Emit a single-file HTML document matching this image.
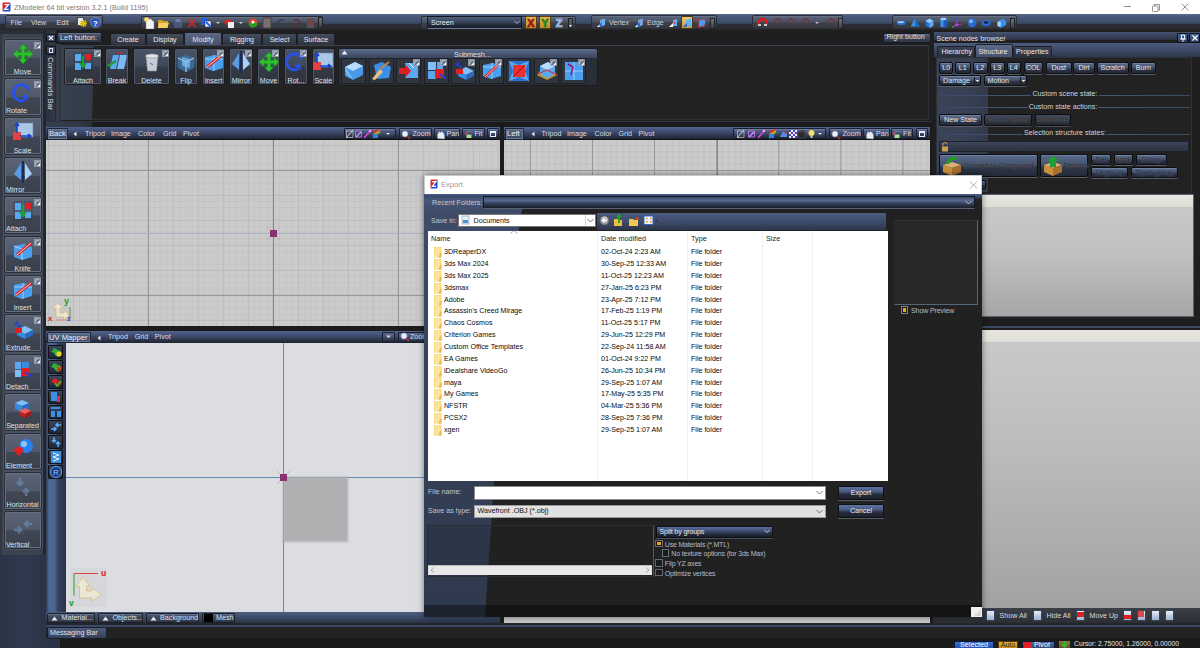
<!DOCTYPE html><html><head><meta charset="utf-8"><style>

*{margin:0;padding:0;box-sizing:border-box}
html,body{width:1200px;height:648px;overflow:hidden;background:#1f1f1f;font-family:"Liberation Sans", sans-serif}
div{position:absolute}
.t{white-space:nowrap;line-height:1}
.lb{background:linear-gradient(#5a6476 0%,#4f596a 50%,#404754 52%,#3a404b 100%);border:1px solid #2a2e36;border-radius:2px;box-shadow:0 0 0 1px #4a5260,inset 0 0 0 1px #646e80}
.cb{background:linear-gradient(#4a5467 0%,#3f4858 48%,#353b46 52%,#2e333c 100%);border:1px solid #1b1d22;border-radius:2px;box-shadow:inset 0 0 0 1px #4f596b}
.sb{background:linear-gradient(#5a6a8c 0%,#46546f 45%,#2e3648 60%,#232a38 100%);border:1px solid #0c0e12;border-radius:2px;box-shadow:0 1px 0 #5a5e66,inset 0 1px 0 #7080a0}
.db{background:linear-gradient(#444c5c,#30363f 50%,#262a32);border:1px solid #0c0e12;border-radius:2px;box-shadow:0 1px 0 #4a4e56}
.grp{background:linear-gradient(#5a6478 0%,#4c5568 45%,#3c4049 58%,#35383f 100%);border:1px solid #2a2e36;border-radius:2px;box-shadow:inset 0 1px 0 #667088}
.tab{background:linear-gradient(#4a5468,#353c4a);border:1px solid #1a1c20;border-bottom:none;border-radius:2px 2px 0 0}
.hdr{background:linear-gradient(#50618a 0%,#3e4c6c 45%,#262e3e 100%)}
.ck{width:8px;height:8px;border:1px solid #707070;background:#1c1c1c}

</style></head><body>
<div style="left:0px;top:0px;width:1200px;height:14px;background:#fff"></div>
<svg style="position:absolute;left:2px;top:2px" width="9" height="10" viewBox="0 0 9 10"><path d="M0.5 1.5Q0.5 0.5 1.5 0.5H8.5L0.5 9.5z" fill="#e02828"/><path d="M8.5 0.5V8.5Q8.5 9.5 7.5 9.5H0.5z" fill="#1a48d0"/><path d="M2.5 2.6H6.5L2.7 7.4H6.7" stroke="#fff" stroke-width="1.3" fill="none"/></svg>
<div class="t" style="left:14px;top:3.5px;font-size:7.22px;color:#7a7a7a;">ZModeler 64 bit version 3.2.1 (Build 1195)</div>
<div style="left:1124px;top:6px;width:7px;height:1px;background:#888"></div>
<svg style="position:absolute;left:1151px;top:2.5px" width="10" height="9" viewBox="0 0 10 9"><rect x="1.5" y="3" width="5.5" height="5.5" fill="none" stroke="#888" stroke-width=".9" rx=".8"/><path d="M3 3V1.5H8.5V7H7" fill="none" stroke="#888" stroke-width=".9"/></svg>
<svg style="position:absolute;left:1180px;top:2px" width="10" height="10" viewBox="0 0 10 10"><path d="M1.5 1.5L8.5 8.5M8.5 1.5L1.5 8.5" stroke="#888" stroke-width="0.9"/></svg>
<div style="left:0px;top:14px;width:1200px;height:16px;background:linear-gradient(180deg,#5a6a8a 0%,#4a5a7c 14%,#3c4a66 58%,#2c2e34 64%,#252527 100%)"></div>
<div class="grp" style="left:5px;top:15px;width:98px;height:14px;"></div>
<div class="t" style="left:10.5px;top:19.6px;font-size:7.1px;color:#d0d6e0;">File</div>
<div class="t" style="left:31px;top:19.6px;font-size:7.1px;color:#d0d6e0;">View</div>
<div class="t" style="left:56.5px;top:19.6px;font-size:7.1px;color:#d0d6e0;">Edit</div>
<svg style="position:absolute;left:77px;top:17px" width="10" height="11" viewBox="0 0 10 11"><rect x="0.5" y="0.5" width="6" height="8" fill="#e8e8e8" stroke="#333" stroke-width="0.8"/><path d="M4 4l5 5M9 4l-5 5M6.5 3v7M3 6.5h7" stroke="#d8c000" stroke-width="1.6"/></svg>
<svg style="position:absolute;left:90px;top:17px" width="11" height="11" viewBox="0 0 11 11"><circle cx="5.5" cy="5.5" r="5" fill="#2a54c0" stroke="#9ab" stroke-width="0.6"/><text x="5.5" y="8.6" font-size="8" fill="#fff" text-anchor="middle" font-family="Liberation Sans" font-weight="bold">?</text></svg>
<div class="grp" style="left:141px;top:15.5px;width:182px;height:13.5px;"></div>
<svg style="position:absolute;left:144px;top:16.5px" width="11" height="12" viewBox="0 0 11 12"><path d="M2 2h5l3 3v7H2z" fill="#f4f4f4" stroke="#888" stroke-width=".5"/><circle cx="2.5" cy="2.5" r="2.3" fill="#ffe060"/></svg>
<svg style="position:absolute;left:158px;top:16.5px" width="11" height="12" viewBox="0 0 11 12"><path d="M0 3h4l1 1h5v7H0z" fill="#d8a030"/><path d="M1 6h10l-2 5H0z" fill="#f8d060"/></svg>
<svg style="position:absolute;left:172.5px;top:16.5px" width="11" height="12" viewBox="0 0 11 12"><rect x="1" y="2" width="8" height="9" fill="#5a6aa0" opacity=".55"/><rect x="3" y="2" width="4" height="3" fill="#8a9ac0" opacity=".5"/></svg>
<svg style="position:absolute;left:186.5px;top:16.5px" width="11" height="12" viewBox="0 0 11 12"><path d="M1.5 2l7 8M8.5 2l-7 8" stroke="#e02020" stroke-width="1.3"/></svg>
<svg style="position:absolute;left:201px;top:16.5px" width="11" height="12" viewBox="0 0 11 12"><path d="M0 1h7v3H4v4H0z" fill="#2060e0"/><rect x="4" y="4" width="6" height="6" fill="#e8eef8" stroke="#223" stroke-width=".5"/><path d="M5 5l5 5" stroke="#2060e0" stroke-width="1.8"/></svg>
<svg style="position:absolute;left:224px;top:16.5px" width="11" height="12" viewBox="0 0 11 12"><path d="M0 5l4-4v2h4v4H4v2z" fill="#e02020"/><rect x="4" y="5" width="6" height="6" fill="#eee"/></svg>
<svg style="position:absolute;left:247.5px;top:16.5px" width="11" height="12" viewBox="0 0 11 12"><circle cx="5" cy="6" r="4.5" fill="#e04020"/><path d="M.5 6a4.5 4.5 0 0 0 9 0z" fill="#20a020"/><circle cx="5" cy="5" r="1.6" fill="#f8f8f8"/></svg>
<svg style="position:absolute;left:262px;top:16.5px" width="11" height="12" viewBox="0 0 11 12"><rect x="1" y="1" width="8" height="10" fill="#7a7070" stroke="#4a4040" stroke-width="1"/></svg>
<svg style="position:absolute;left:276.5px;top:16.5px" width="11" height="12" viewBox="0 0 11 12"><path d="M3 4a3.5 3.5 0 1 1 0 5" fill="none" stroke="#303a60" stroke-width="1.3" transform="scale(-1,1) translate(-10,0)"/></svg>
<svg style="position:absolute;left:291px;top:16.5px" width="11" height="12" viewBox="0 0 11 12"><path d="M3 4a3.5 3.5 0 1 1 0 5" fill="none" stroke="#5a3030" stroke-width="1.3"/></svg>
<svg style="position:absolute;left:305.5px;top:16.5px" width="11" height="12" viewBox="0 0 11 12"><rect x="1" y="1" width="7" height="10" fill="#5a5050"/><path d="M2 4h5M2 7h5" stroke="#a03030"/></svg>
<svg style="position:absolute;left:215.5px;top:21px" width="4" height="4" viewBox="0 0 4 4"><path d="M0 1h4L2 3z" fill="#ccc"/></svg>
<svg style="position:absolute;left:239px;top:21px" width="4" height="4" viewBox="0 0 4 4"><path d="M0 1h4L2 3z" fill="#ccc"/></svg>
<div style="left:318px;top:17px;width:4.5px;height:11px;background:linear-gradient(#6a7388,#3a4050);border:1px solid #222"></div>
<div class="grp" style="left:421px;top:15.5px;width:155px;height:13.5px;"></div>
<div style="left:426.5px;top:16px;width:95.5px;height:12.5px;background:linear-gradient(#52627f,#3a4660 40%,#222838 75%,#1a1e2a);border:1px solid #14171e;border-bottom-color:#6a7a98;border-radius:2px"></div>
<div class="t" style="left:431px;top:19.6px;font-size:7.15px;color:#eef0f4;">Screen</div>
<svg style="position:absolute;left:514px;top:19.5px" width="6" height="5" viewBox="0 0 6 5"><path d="M0.5 1L3 3.5 5.5 1" stroke="#ccd" fill="none" stroke-width=".9"/></svg>
<div style="left:525px;top:16px;width:12px;height:13px;background:linear-gradient(#e8b850,#c08828);border:1px solid #5a4010;border-radius:1px"></div>
<svg style="position:absolute;left:525px;top:16px" width="12" height="13" viewBox="0 0 12 13"><text x="6" y="11" font-size="11" font-weight="bold" text-anchor="middle" fill="#c81818" stroke="#801010" stroke-width=".6" font-family="Liberation Sans">X</text></svg>
<div style="left:539px;top:16px;width:12px;height:13px;background:linear-gradient(#e8b850,#c08828);border:1px solid #5a4010;border-radius:1px"></div>
<svg style="position:absolute;left:539px;top:16px" width="12" height="13" viewBox="0 0 12 13"><text x="6" y="11" font-size="11" font-weight="bold" text-anchor="middle" fill="#28b028" stroke="#106010" stroke-width=".6" font-family="Liberation Sans">Y</text></svg>
<svg style="position:absolute;left:553px;top:16px" width="12" height="13" viewBox="0 0 12 13"><text x="6" y="11" font-size="11" font-weight="bold" text-anchor="middle" fill="#2a78f0" stroke="#f0f4ff" stroke-width=".5" font-family="Liberation Sans">Z</text></svg>
<div style="left:568px;top:18px;width:5px;height:10.5px;background:linear-gradient(#5a6378,#3a4050);border:1px solid #222"></div>
<svg style="position:absolute;left:569px;top:25px" width="3" height="2" viewBox="0 0 3 2"><path d="M0 0h3L1.5 2z" fill="#fff"/></svg>
<div class="grp" style="left:591px;top:15px;width:126px;height:14px;"></div>
<svg style="position:absolute;left:596px;top:17px" width="11" height="11" viewBox="0 0 11 11"><path d="M4 3l5-1.5V8L4 10z" fill="#6ab0f8"/><path d="M1 10L6 5v5z" fill="#2a6ad0"/><path d="M1 10l2.5-2.5V10z" fill="#fff"/><circle cx="3.5" cy="4" r="1" fill="#e02020"/><path d="M1 1.5l2.5 2" stroke="#20a020" stroke-width=".8"/></svg>
<div class="t" style="left:609px;top:20.4px;font-size:7.1px;color:#c8d0dc;">Vertex</div>
<svg style="position:absolute;left:634px;top:17px" width="11" height="11" viewBox="0 0 11 11"><path d="M4 3l5-1.5V8L4 10z" fill="#6ab0f8"/><path d="M1 10L6 5v5z" fill="#2a6ad0"/><path d="M1 10l2.5-2.5V10z" fill="#fff"/><circle cx="3.5" cy="4" r="1" fill="#e02020"/><path d="M1 1.5l2.5 2" stroke="#20a020" stroke-width=".8"/><path d="M2 10l2 1.5" stroke="#20a020" stroke-width=".8"/><path d="M9 2v6" stroke="#e02020" stroke-width=".6"/></svg>
<div class="t" style="left:647px;top:20.4px;font-size:7.1px;color:#c8d0dc;">Edge</div>
<svg style="position:absolute;left:668px;top:17px" width="11" height="11" viewBox="0 0 11 11"><path d="M5 3l4-1v7H5z" fill="#6ab0f8"/><path d="M1 10l4-4v4z" fill="#fff"/><path d="M6 5l2 1-2 1z" fill="#e02020"/><path d="M5 2l2 1" stroke="#e02020" stroke-width=".6"/></svg>
<div style="left:681px;top:15.5px;width:12px;height:13.5px;background:linear-gradient(#f0c870,#c89838);border:1px solid #4a3a10;border-radius:1px"></div>
<svg style="position:absolute;left:682px;top:17.5px" width="11" height="11" viewBox="0 0 11 11"><path d="M4 2l5-1.5V8L4 9z" fill="#6ab0f8"/><path d="M1 9L5 5v4z" fill="#2a6ad0"/></svg>
<svg style="position:absolute;left:696px;top:17px" width="11" height="11" viewBox="0 0 11 11"><path d="M3 3l5-1.5 2 3-2 5-5 .5z" fill="#4a98f0"/><path d="M1 3l9-1-1 7-6 1z" fill="none" stroke="#e02020" stroke-width=".7"/><circle cx="1" cy="3" r="1" fill="#e02020"/><circle cx="3" cy="10" r="1" fill="#e02020"/></svg>
<div style="left:710px;top:18px;width:5px;height:10.5px;background:linear-gradient(#6a7388,#3a4050);border:1px solid #222"></div>
<div class="grp" style="left:752px;top:15px;width:91px;height:14px;"></div>
<svg style="position:absolute;left:757px;top:17px" width="11" height="11" viewBox="0 0 11 11"><path d="M2 8a4 4 0 1 1 7 0" fill="none" stroke="#e01818" stroke-width="2.6"/><path d="M1 8h3M7 8h3" stroke="#f0f0f0" stroke-width="1.5"/></svg>
<svg style="position:absolute;left:772px;top:17px" width="11" height="11" viewBox="0 0 11 11"><path d="M2 8a4 4 0 1 1 7 0" fill="none" stroke="#6a3a40" stroke-width="1.6"/><circle cx="5.5" cy="5" r="1.5" fill="none" stroke="#5a4a50" stroke-width=".6"/></svg>
<svg style="position:absolute;left:786px;top:17px" width="11" height="11" viewBox="0 0 11 11"><path d="M2 8a4 4 0 1 1 7 0" fill="none" stroke="#6a3a40" stroke-width="1.6"/><circle cx="5.5" cy="5" r="1.5" fill="none" stroke="#5a4a50" stroke-width=".6"/></svg>
<svg style="position:absolute;left:800px;top:17px" width="11" height="11" viewBox="0 0 11 11"><path d="M2 8a4 4 0 1 1 7 0" fill="none" stroke="#6a3a40" stroke-width="1.6"/><circle cx="5.5" cy="5" r="1.5" fill="none" stroke="#5a4a50" stroke-width=".6"/></svg>
<svg style="position:absolute;left:826px;top:17px" width="11" height="11" viewBox="0 0 11 11"><path d="M2 8a4 4 0 1 1 7 0" fill="none" stroke="#6a3a40" stroke-width="1.6"/><circle cx="5.5" cy="5" r="1.5" fill="none" stroke="#5a4a50" stroke-width=".6"/></svg>
<svg style="position:absolute;left:815px;top:21px" width="4" height="4" viewBox="0 0 4 4"><path d="M0 1h4L2 3z" fill="#bbb"/></svg>
<div style="left:838px;top:18px;width:5px;height:10.5px;background:linear-gradient(#6a7388,#3a4050);border:1px solid #222"></div>
<div class="grp" style="left:892px;top:15px;width:125px;height:14px;"></div>
<svg style="position:absolute;left:896px;top:16.5px" width="11" height="11" viewBox="0 0 14 14"><rect x="1" y="5" width="11" height="5" rx="2.5" fill="#2a7ae0"/><rect x="2" y="5.5" width="8" height="2" rx="1" fill="#9cd0ff"/></svg>
<svg style="position:absolute;left:910px;top:16.5px" width="11" height="11" viewBox="0 0 14 14"><path d="M6.5 1L12 12H1z" fill="#3a90e8"/><path d="M6.5 1L12 12H7z" fill="#1a60c0"/></svg>
<svg style="position:absolute;left:924px;top:16.5px" width="11" height="11" viewBox="0 0 14 14"><path d="M2 5l5-3 5 3v6l-5 3-5-3z" fill="#2a70c8"/><path d="M2 5l5-3 5 3-5 3z" fill="#90c8ff"/><path d="M7 8v6l5-3V5z" fill="#60a8f0"/></svg>
<svg style="position:absolute;left:938px;top:16.5px" width="11" height="11" viewBox="0 0 14 14"><rect x="3" y="2" width="8" height="11" rx="2" fill="#3a90e8"/><rect x="7" y="2" width="4" height="11" fill="#1a5ac0"/><ellipse cx="7" cy="2.5" rx="4" ry="1.5" fill="#a0d0ff"/></svg>
<svg style="position:absolute;left:952px;top:16.5px" width="11" height="11" viewBox="0 0 14 14"><path d="M6 2v8M6 10l-5 3M6 10l6-1" stroke="#9040c0" stroke-width="1.2"/><circle cx="6" cy="10" r="2" fill="#c040e0"/><circle cx="1.5" cy="12.5" r="1.2" fill="#20c020"/><circle cx="12" cy="9" r="1.2" fill="#e02020"/><circle cx="6" cy="2" r="1.2" fill="#2050e0"/></svg>
<svg style="position:absolute;left:967px;top:16.5px" width="11" height="11" viewBox="0 0 14 14"><circle cx="6.5" cy="7.5" r="5.5" fill="#2a6ad0"/><circle cx="5" cy="5.5" r="2.5" fill="#90c8ff" opacity=".8"/></svg>
<svg style="position:absolute;left:981px;top:16.5px" width="11" height="11" viewBox="0 0 14 14"><ellipse cx="6.5" cy="7.5" rx="6" ry="4" fill="#2a6ad0"/><ellipse cx="6.5" cy="7" rx="3" ry="1.5" fill="#1a2030"/></svg>
<svg style="position:absolute;left:996px;top:16.5px" width="11" height="11" viewBox="0 0 14 14"><path d="M2 6l7-4 4 3v5l-7 4-4-3z" fill="#3a90e8"/><ellipse cx="4" cy="9" rx="2.5" ry="3.5" fill="#a0d0ff"/></svg>
<div style="left:1010px;top:18px;width:5px;height:10.5px;background:linear-gradient(#6a7388,#3a4050);border:1px solid #222"></div>
<div style="left:0px;top:30px;width:43px;height:525px;background:linear-gradient(90deg,#30353f,#3c4350 8%,#3c4350 92%,#343a45)"></div>
<div style="left:0px;top:30px;width:43px;height:4px;background:#2a2e36"></div>
<div style="left:0px;top:555px;width:46px;height:93px;background:linear-gradient(90deg,#2a3446,#2f3a4e 50%,#2a3446)"></div>
<div class="lb" style="left:3.5px;top:38.6px;width:38px;height:37.5px;"></div>
<svg style="position:absolute;left:11px;top:42.6px" width="24" height="22" viewBox="0 0 24 22"><g style="opacity:1"><path d="M12 1L16.5 6.0H13.7V9.3H17.0V6.5L22 11L17.0 15.5V12.7H13.7V16.0H16.5L12 21L7.5 16.0H10.3V12.7H7.0V15.5L2 11L7.0 6.5V9.3H10.3V6.0H7.5Z" fill="#2ec02e" stroke="#1a8a1a" stroke-width=".6"/></g></svg>
<svg style="position:absolute;left:34px;top:41.6px" width="7" height="7" viewBox="0 0 7 7"><rect x=".5" y=".5" width="6" height="6" fill="#5e687a" stroke="#a8b2c2" stroke-width=".7"/><path d="M1.8 5.5V1.8H5.5" stroke="#f0f2f6" fill="none" stroke-width=".8"/><path d="M3 6l3-3v3z" fill="#f0f2f6"/></svg>
<div class="t" style="left:3.5px;top:68.8px;width:38px;text-align:center;font-size:7.1px;color:#dfe3ea">Move</div>
<div class="lb" style="left:3.5px;top:78.0px;width:38px;height:37.5px;"></div>
<svg style="position:absolute;left:11px;top:82.0px" width="24" height="22" viewBox="0 0 24 22"><g style="opacity:1"><path d="M18 8A8 8 0 1 0 14 18" fill="none" stroke="#2a50e8" stroke-width="3"/><path d="M10 15l7 4-1-7z" fill="#2a50e8"/></g></svg>
<svg style="position:absolute;left:34px;top:81.0px" width="7" height="7" viewBox="0 0 7 7"><rect x=".5" y=".5" width="6" height="6" fill="#5e687a" stroke="#a8b2c2" stroke-width=".7"/><path d="M1.8 5.5V1.8H5.5" stroke="#f0f2f6" fill="none" stroke-width=".8"/><path d="M3 6l3-3v3z" fill="#f0f2f6"/></svg>
<div class="t" style="left:6px;top:108.2px;font-size:7.1px;color:#dfe3ea;">Rotate</div>
<div class="lb" style="left:3.5px;top:117.4px;width:38px;height:37.5px;"></div>
<svg style="position:absolute;left:11px;top:121.4px" width="24" height="22" viewBox="0 0 24 22"><g style="opacity:1"><rect x="6" y="2" width="16" height="14" fill="#a8c8e8" stroke="#6a88a8" stroke-width=".6"/><rect x="2" y="11" width="8" height="8" fill="#e84040"/><path d="M6 12V3M4 5l2-3 2 3" stroke="#1a40d0" stroke-width="1.5" fill="#1a40d0"/><path d="M9 15h10M17 13l3 2-3 2" stroke="#1a40d0" stroke-width="1.5" fill="#1a40d0"/></g></svg>
<div class="t" style="left:3.5px;top:147.6px;width:38px;text-align:center;font-size:7.1px;color:#dfe3ea">Scale</div>
<div class="lb" style="left:3.5px;top:156.79999999999998px;width:38px;height:37.5px;"></div>
<svg style="position:absolute;left:11px;top:160.79999999999998px" width="24" height="22" viewBox="0 0 24 22"><g style="opacity:1"><path d="M10 2L3 13l7 6z" fill="#5a9ae0"/><path d="M14 2l7 11-7 6z" fill="#a8d0f8"/><rect x="11" y="0" width="2" height="22" fill="#1a2a60"/></g></svg>
<svg style="position:absolute;left:34px;top:159.79999999999998px" width="7" height="7" viewBox="0 0 7 7"><rect x=".5" y=".5" width="6" height="6" fill="#5e687a" stroke="#a8b2c2" stroke-width=".7"/><path d="M1.8 5.5V1.8H5.5" stroke="#f0f2f6" fill="none" stroke-width=".8"/><path d="M3 6l3-3v3z" fill="#f0f2f6"/></svg>
<div class="t" style="left:6px;top:186.99999999999997px;font-size:7.1px;color:#dfe3ea;">Mirror</div>
<div class="lb" style="left:3.5px;top:196.2px;width:38px;height:37.5px;"></div>
<svg style="position:absolute;left:11px;top:200.2px" width="24" height="22" viewBox="0 0 24 22"><g style="opacity:1"><rect x="4" y="3" width="6" height="7" fill="#5aa8f0"/><rect x="4" y="12" width="6" height="7" fill="#5aa8f0"/><rect x="14" y="12" width="6" height="6" fill="#5aa8f0"/><rect x="14" y="3" width="6" height="6" fill="#e02020"/><path d="M12 5v10M9 12l3 4 3-4" stroke="#20a030" stroke-width="2" fill="none"/><rect x="3" y="2" width="18" height="18" fill="none" stroke="#20283a" stroke-dasharray="1 1.5"/></g></svg>
<svg style="position:absolute;left:34px;top:199.2px" width="7" height="7" viewBox="0 0 7 7"><rect x=".5" y=".5" width="6" height="6" fill="#5e687a" stroke="#a8b2c2" stroke-width=".7"/><path d="M1.8 5.5V1.8H5.5" stroke="#f0f2f6" fill="none" stroke-width=".8"/><path d="M3 6l3-3v3z" fill="#f0f2f6"/></svg>
<div class="t" style="left:6px;top:226.39999999999998px;font-size:7.1px;color:#dfe3ea;">Attach</div>
<div class="lb" style="left:3.5px;top:235.6px;width:38px;height:37.5px;"></div>
<svg style="position:absolute;left:11px;top:239.6px" width="24" height="22" viewBox="0 0 24 22"><g style="opacity:1"><path d="M3 6l10-2 8 3v10l-10 3-8-3z" fill="#4aa0f0"/><path d="M3 6l8 3v11" fill="none" stroke="#c8e4ff" stroke-width=".8"/><path d="M6 15L20 3" stroke="#e02020" stroke-width="3"/><path d="M6 15L20 3" stroke="#fff" stroke-width=".8"/></g></svg>
<svg style="position:absolute;left:34px;top:238.6px" width="7" height="7" viewBox="0 0 7 7"><rect x=".5" y=".5" width="6" height="6" fill="#5e687a" stroke="#a8b2c2" stroke-width=".7"/><path d="M1.8 5.5V1.8H5.5" stroke="#f0f2f6" fill="none" stroke-width=".8"/><path d="M3 6l3-3v3z" fill="#f0f2f6"/></svg>
<div class="t" style="left:3.5px;top:265.8px;width:38px;text-align:center;font-size:7.1px;color:#dfe3ea">Knife</div>
<div class="lb" style="left:3.5px;top:275.0px;width:38px;height:37.5px;"></div>
<svg style="position:absolute;left:11px;top:279.0px" width="24" height="22" viewBox="0 0 24 22"><g style="opacity:1"><path d="M3 6l10-2 8 3v10l-10 3-8-3z" fill="#4aa0f0"/><path d="M3 8h18M12 4v16" stroke="#a8d8ff" stroke-width=".8"/><path d="M5 16L20 4" stroke="#e02020" stroke-width="3"/><path d="M5 16L20 4" stroke="#fff" stroke-width=".8"/></g></svg>
<svg style="position:absolute;left:34px;top:278.0px" width="7" height="7" viewBox="0 0 7 7"><rect x=".5" y=".5" width="6" height="6" fill="#5e687a" stroke="#a8b2c2" stroke-width=".7"/><path d="M1.8 5.5V1.8H5.5" stroke="#f0f2f6" fill="none" stroke-width=".8"/><path d="M3 6l3-3v3z" fill="#f0f2f6"/></svg>
<div class="t" style="left:3.5px;top:305.2px;width:38px;text-align:center;font-size:7.1px;color:#dfe3ea">Insert</div>
<div class="lb" style="left:3.5px;top:314.40000000000003px;width:38px;height:37.5px;"></div>
<svg style="position:absolute;left:11px;top:318.40000000000003px" width="24" height="22" viewBox="0 0 24 22"><g style="opacity:1"><path d="M6 12l8-4 8 4-8 4z" fill="#80c0f8"/><path d="M6 12v5l8 4v-5z" fill="#3a8ae0"/><path d="M14 16v5l8-4v-5z" fill="#2a6ac0"/><rect x="4" y="10" width="7" height="5" fill="#e02020"/><path d="M7 10V2l-4 5h8z" fill="#1a40e0"/></g></svg>
<svg style="position:absolute;left:34px;top:317.40000000000003px" width="7" height="7" viewBox="0 0 7 7"><rect x=".5" y=".5" width="6" height="6" fill="#5e687a" stroke="#a8b2c2" stroke-width=".7"/><path d="M1.8 5.5V1.8H5.5" stroke="#f0f2f6" fill="none" stroke-width=".8"/><path d="M3 6l3-3v3z" fill="#f0f2f6"/></svg>
<div class="t" style="left:6px;top:344.6px;font-size:7.1px;color:#dfe3ea;">Extrude</div>
<div class="lb" style="left:3.5px;top:353.8px;width:38px;height:37.5px;"></div>
<svg style="position:absolute;left:11px;top:357.8px" width="24" height="22" viewBox="0 0 24 22"><g style="opacity:1"><rect x="4" y="4" width="6" height="7" fill="#5aa8f0"/><rect x="4" y="12" width="6" height="7" fill="#80c0f8"/><rect x="11" y="4" width="7" height="7" fill="#3a8ae0"/><path d="M10 10h8v8h-8z" fill="#e02020"/><path d="M14 14l7 5" stroke="#1a40e0" stroke-width="2"/></g></svg>
<svg style="position:absolute;left:34px;top:356.8px" width="7" height="7" viewBox="0 0 7 7"><rect x=".5" y=".5" width="6" height="6" fill="#5e687a" stroke="#a8b2c2" stroke-width=".7"/><path d="M1.8 5.5V1.8H5.5" stroke="#f0f2f6" fill="none" stroke-width=".8"/><path d="M3 6l3-3v3z" fill="#f0f2f6"/></svg>
<div class="t" style="left:6px;top:384.0px;font-size:7.1px;color:#dfe3ea;">Detach</div>
<div class="lb" style="left:3.5px;top:393.2px;width:38px;height:37.5px;"></div>
<svg style="position:absolute;left:11px;top:397.2px" width="24" height="22" viewBox="0 0 24 22"><g style="opacity:1"><path d="M4 6l7-3 7 3-7 3z" fill="#80c0f8"/><path d="M4 6v6l7 3V9z" fill="#3a8ae0"/><path d="M11 9v6l7-3V6z" fill="#2a6ac0"/><path d="M8 14l6-3 6 3-6 3z" fill="#f06060"/><path d="M8 14v4l6 3v-4z" fill="#c02020"/><path d="M14 17v4l6-3v-4z" fill="#a01818"/></g></svg>
<div class="t" style="left:3.5px;top:423.4px;width:38px;text-align:center;font-size:7.1px;color:#dfe3ea">Separated</div>
<div class="lb" style="left:3.5px;top:432.6px;width:38px;height:37.5px;"></div>
<svg style="position:absolute;left:11px;top:436.6px" width="24" height="22" viewBox="0 0 24 22"><g style="opacity:1"><circle cx="15" cy="9" r="7" fill="#2a80f0"/><circle cx="13" cy="7" r="3" fill="#a8d8ff" opacity=".8"/><path d="M2 13l6-4 5 4-5 6z" fill="#e02020"/></g></svg>
<div class="t" style="left:6px;top:462.8px;font-size:7.1px;color:#dfe3ea;">Element</div>
<div class="lb" style="left:3.5px;top:472.0px;width:38px;height:37.5px;"></div>
<svg style="position:absolute;left:11px;top:476.0px" width="24" height="22" viewBox="0 0 24 22"><g style="opacity:0.7"><path d="M9 2v6M6 6l3 3 3-3" stroke="#6a88b0" stroke-width="2.5" fill="none"/><path d="M3 11h18" stroke="#4a5a70" stroke-width="1"/><path d="M15 20v-6M12 16l3-3 3 3" stroke="#6a88b0" stroke-width="2.5" fill="none"/></g></svg>
<div class="t" style="left:3.5px;top:502.2px;width:38px;text-align:center;font-size:7.1px;color:#dfe3ea">Horizontal</div>
<div class="lb" style="left:3.5px;top:511.4px;width:38px;height:37.5px;"></div>
<svg style="position:absolute;left:11px;top:515.4px" width="24" height="22" viewBox="0 0 24 22"><g style="opacity:0.7"><path d="M3 15h6M7 12l3 3-3 3" stroke="#6a88b0" stroke-width="2.5" fill="none"/><path d="M12 4v16" stroke="#4a5a70" stroke-width="1"/><path d="M21 9h-6M17 6l-3 3 3 3" stroke="#6a88b0" stroke-width="2.5" fill="none"/></g></svg>
<div class="t" style="left:6px;top:541.6px;font-size:7.1px;color:#dfe3ea;">Vertical</div>
<div style="left:43px;top:30px;width:3px;height:525px;background:#23272e"></div>
<div style="left:46px;top:30px;width:10px;height:92px;background:linear-gradient(90deg,#2a303c,#313846);border-right:1px solid #262a33"></div>
<div style="left:56px;top:44px;width:5px;height:77px;background:#353c4a"></div>
<div style="left:46.3px;top:33.5px;width:9.4px;height:8.6px;background:linear-gradient(#4a5878,#2e3850);border:1px solid #0e1016;border-radius:1px"></div>
<svg style="position:absolute;left:47px;top:34px" width="8" height="8" viewBox="0 0 8 8"><path d="M2 2l4 4M6 2L2 6" stroke="#f0f0f0" stroke-width="1.2"/></svg>
<div style="left:46.3px;top:45.5px;width:9.4px;height:9px;background:linear-gradient(#4a5878,#2e3850);border:1px solid #0e1016;border-radius:1px"></div>
<div style="left:49px;top:47.5px;width:4px;height:5px;border:1px solid #e0e0e0;border-top-width:1.5px"></div>
<div class="t" style="left:46.3px;top:56.5px;font-size:7.7px;color:#d4d8e0;writing-mode:vertical-rl;">Commands Bar</div>
<div style="left:57px;top:32.4px;width:44.5px;height:10.4px;background:linear-gradient(#4e5a72,#3a4458 50%,#2e3648);border:1px solid #1a1d22;border-radius:2px;box-shadow:inset 0 1px 0 #64708a"></div>
<div class="t" style="left:60px;top:34.3px;font-size:7.4px;color:#dce0e8;">Left button:</div>
<div style="left:60px;top:44.5px;width:868.5px;height:75.5px;background:#232323;border:1px solid #2d3138;border-top-color:#3a4150"></div>
<div style="left:61px;top:45px;width:34px;height:75px;background:linear-gradient(90deg,#36404f,#323b4a);clip-path:polygon(0 0,33px 0,31px 75px,0 75px)"></div>
<div style="left:110px;top:33px;width:36px;height:12px;background:linear-gradient(#434c5e,#2e333e);border:1px solid #1b1d22;border-bottom:none;border-radius:2px 2px 0 0"></div>
<div class="t" style="left:110px;top:37.3px;width:36px;text-align:center;font-size:7.1px;color:#e4e8ee">Create</div>
<div style="left:146px;top:33px;width:38px;height:12px;background:linear-gradient(#434c5e,#2e333e);border:1px solid #1b1d22;border-bottom:none;border-radius:2px 2px 0 0"></div>
<div class="t" style="left:146px;top:37.3px;width:38px;text-align:center;font-size:7.1px;color:#e4e8ee">Display</div>
<div style="left:184px;top:31.5px;width:38px;height:13.5px;background:linear-gradient(#5c6884,#46506a);border:1px solid #1b1d22;border-bottom:none;border-radius:2px 2px 0 0"></div>
<div class="t" style="left:184px;top:36.8px;width:38px;text-align:center;font-size:7.1px;color:#e4e8ee">Modify</div>
<div style="left:222px;top:33px;width:40px;height:12px;background:linear-gradient(#434c5e,#2e333e);border:1px solid #1b1d22;border-bottom:none;border-radius:2px 2px 0 0"></div>
<div class="t" style="left:222px;top:37.3px;width:40px;text-align:center;font-size:7.1px;color:#e4e8ee">Rigging</div>
<div style="left:262px;top:33px;width:35px;height:12px;background:linear-gradient(#434c5e,#2e333e);border:1px solid #1b1d22;border-bottom:none;border-radius:2px 2px 0 0"></div>
<div class="t" style="left:262px;top:37.3px;width:35px;text-align:center;font-size:7.1px;color:#e4e8ee">Select</div>
<div style="left:297px;top:33px;width:38px;height:12px;background:linear-gradient(#434c5e,#2e333e);border:1px solid #1b1d22;border-bottom:none;border-radius:2px 2px 0 0"></div>
<div class="t" style="left:297px;top:37.3px;width:38px;text-align:center;font-size:7.1px;color:#e4e8ee">Surface</div>
<div class="cb" style="left:64px;top:47.8px;width:38px;height:37px;"></div>
<svg style="position:absolute;left:71.0px;top:50.5px" width="24" height="22" viewBox="0 0 24 22"><rect x="4" y="3" width="6" height="7" fill="#5aa8f0"/><rect x="4" y="12" width="6" height="7" fill="#5aa8f0"/><rect x="14" y="12" width="6" height="6" fill="#5aa8f0"/><rect x="14" y="3" width="6" height="6" fill="#e02020"/><path d="M12 5v10M9 12l3 4 3-4" stroke="#20a030" stroke-width="2" fill="none"/><rect x="3" y="2" width="18" height="18" fill="none" stroke="#20283a" stroke-dasharray="1 1.5"/></svg>
<svg style="position:absolute;left:94px;top:49.5px" width="7" height="7" viewBox="0 0 7 7"><rect x=".5" y=".5" width="6" height="6" fill="#5e687a" stroke="#a8b2c2" stroke-width=".7"/><path d="M1.8 5.5V1.8H5.5" stroke="#f0f2f6" fill="none" stroke-width=".8"/><path d="M3 6l3-3v3z" fill="#f0f2f6"/></svg>
<div class="t" style="left:64px;top:77.8px;width:38px;text-align:center;font-size:7.1px;color:#e0e4ea">Attach</div>
<div class="cb" style="left:105px;top:47.8px;width:24px;height:37px;"></div>
<svg style="position:absolute;left:105.0px;top:50.5px" width="24" height="22" viewBox="0 0 24 22"><path d="M8 4h6l-3 14H5z" fill="#5aa8f0"/><path d="M15 4h7l-3 14h-7z" fill="#7ab8f8"/><path d="M11 10L3 15" stroke="#20a030" stroke-width="2.5"/><circle cx="13" cy="2" r="1" fill="#e02020"/><circle cx="16" cy="2" r="1" fill="#e02020"/></svg>
<div class="t" style="left:105px;top:77.8px;width:24px;text-align:center;font-size:7.1px;color:#e0e4ea">Break</div>
<div class="cb" style="left:133px;top:47.8px;width:37px;height:37px;"></div>
<svg style="position:absolute;left:139.5px;top:50.5px" width="24" height="22" viewBox="0 0 24 22"><path d="M6 5h12l-1.5 15h-9z" fill="#c8ccd0" stroke="#8a9098" stroke-width=".6"/><ellipse cx="12" cy="5" rx="6.5" ry="2" fill="#e0e4e8" stroke="#8a9098" stroke-width=".6"/><path d="M10 12l3 2" stroke="#3a70d0"/></svg>
<svg style="position:absolute;left:162px;top:49.5px" width="7" height="7" viewBox="0 0 7 7"><rect x=".5" y=".5" width="6" height="6" fill="#5e687a" stroke="#a8b2c2" stroke-width=".7"/><path d="M1.8 5.5V1.8H5.5" stroke="#f0f2f6" fill="none" stroke-width=".8"/><path d="M3 6l3-3v3z" fill="#f0f2f6"/></svg>
<div class="t" style="left:133px;top:77.8px;width:37px;text-align:center;font-size:7.1px;color:#e0e4ea">Delete</div>
<div class="cb" style="left:174px;top:47.8px;width:24px;height:37px;"></div>
<svg style="position:absolute;left:174.0px;top:50.5px" width="24" height="22" viewBox="0 0 24 22"><path d="M4 7l8-4 8 4v10l-8 4-8-4z" fill="#3a6a98"/><path d="M4 7l8 4 8-4" fill="none" stroke="#b8dcf8" stroke-width="1"/><path d="M12 11v10" stroke="#b8dcf8"/><path d="M8 6l8 2v9l-8-2z" fill="#80c0f0" opacity=".7"/></svg>
<div class="t" style="left:174px;top:77.8px;width:24px;text-align:center;font-size:7.1px;color:#e0e4ea">Flip</div>
<div class="cb" style="left:202px;top:47.8px;width:23px;height:37px;"></div>
<svg style="position:absolute;left:201.5px;top:50.5px" width="24" height="22" viewBox="0 0 24 22"><path d="M3 6l10-2 8 3v10l-10 3-8-3z" fill="#4aa0f0"/><path d="M3 8h18M12 4v16" stroke="#a8d8ff" stroke-width=".8"/><path d="M5 16L20 4" stroke="#e02020" stroke-width="3"/><path d="M5 16L20 4" stroke="#fff" stroke-width=".8"/></svg>
<svg style="position:absolute;left:217px;top:49.5px" width="7" height="7" viewBox="0 0 7 7"><rect x=".5" y=".5" width="6" height="6" fill="#5e687a" stroke="#a8b2c2" stroke-width=".7"/><path d="M1.8 5.5V1.8H5.5" stroke="#f0f2f6" fill="none" stroke-width=".8"/><path d="M3 6l3-3v3z" fill="#f0f2f6"/></svg>
<div class="t" style="left:202px;top:77.8px;width:23px;text-align:center;font-size:7.1px;color:#e0e4ea">Insert</div>
<div class="cb" style="left:229px;top:47.8px;width:24px;height:37px;"></div>
<svg style="position:absolute;left:229.0px;top:50.5px" width="24" height="22" viewBox="0 0 24 22"><path d="M10 2L3 13l7 6z" fill="#5a9ae0"/><path d="M14 2l7 11-7 6z" fill="#a8d0f8"/><rect x="11" y="0" width="2" height="22" fill="#1a2a60"/></svg>
<svg style="position:absolute;left:245px;top:49.5px" width="7" height="7" viewBox="0 0 7 7"><rect x=".5" y=".5" width="6" height="6" fill="#5e687a" stroke="#a8b2c2" stroke-width=".7"/><path d="M1.8 5.5V1.8H5.5" stroke="#f0f2f6" fill="none" stroke-width=".8"/><path d="M3 6l3-3v3z" fill="#f0f2f6"/></svg>
<div class="t" style="left:229px;top:77.8px;width:24px;text-align:center;font-size:7.1px;color:#e0e4ea">Mirror</div>
<div class="cb" style="left:257px;top:47.8px;width:23px;height:37px;"></div>
<svg style="position:absolute;left:256.5px;top:50.5px" width="24" height="22" viewBox="0 0 24 22"><path d="M12 1L16.5 6.0H13.7V9.3H17.0V6.5L22 11L17.0 15.5V12.7H13.7V16.0H16.5L12 21L7.5 16.0H10.3V12.7H7.0V15.5L2 11L7.0 6.5V9.3H10.3V6.0H7.5Z" fill="#2ec02e" stroke="#1a8a1a" stroke-width=".6"/></svg>
<svg style="position:absolute;left:272px;top:49.5px" width="7" height="7" viewBox="0 0 7 7"><rect x=".5" y=".5" width="6" height="6" fill="#5e687a" stroke="#a8b2c2" stroke-width=".7"/><path d="M1.8 5.5V1.8H5.5" stroke="#f0f2f6" fill="none" stroke-width=".8"/><path d="M3 6l3-3v3z" fill="#f0f2f6"/></svg>
<div class="t" style="left:257px;top:77.8px;width:23px;text-align:center;font-size:7.1px;color:#e0e4ea">Move</div>
<div class="cb" style="left:284px;top:47.8px;width:24px;height:37px;"></div>
<svg style="position:absolute;left:284.0px;top:50.5px" width="24" height="22" viewBox="0 0 24 22"><path d="M18 8A8 8 0 1 0 14 18" fill="none" stroke="#2a50e8" stroke-width="3"/><path d="M10 15l7 4-1-7z" fill="#2a50e8"/></svg>
<svg style="position:absolute;left:300px;top:49.5px" width="7" height="7" viewBox="0 0 7 7"><rect x=".5" y=".5" width="6" height="6" fill="#5e687a" stroke="#a8b2c2" stroke-width=".7"/><path d="M1.8 5.5V1.8H5.5" stroke="#f0f2f6" fill="none" stroke-width=".8"/><path d="M3 6l3-3v3z" fill="#f0f2f6"/></svg>
<div class="t" style="left:284px;top:77.8px;width:24px;text-align:center;font-size:7.1px;color:#e0e4ea">Rot...</div>
<div class="cb" style="left:311.5px;top:47.8px;width:23.5px;height:37px;"></div>
<svg style="position:absolute;left:311.25px;top:50.5px" width="24" height="22" viewBox="0 0 24 22"><rect x="6" y="2" width="16" height="14" fill="#a8c8e8" stroke="#6a88a8" stroke-width=".6"/><rect x="2" y="11" width="8" height="8" fill="#e84040"/><path d="M6 12V3M4 5l2-3 2 3" stroke="#1a40d0" stroke-width="1.5" fill="#1a40d0"/><path d="M9 15h10M17 13l3 2-3 2" stroke="#1a40d0" stroke-width="1.5" fill="#1a40d0"/></svg>
<div class="t" style="left:311.5px;top:77.8px;width:23.5px;text-align:center;font-size:7.1px;color:#e0e4ea">Scale</div>
<div style="left:338px;top:47.5px;width:260px;height:38.5px;background:#2a2e36;border:1px solid #1a1c20;border-radius:2px"></div>
<div style="left:339px;top:48.5px;width:258px;height:9.3px;background:linear-gradient(#5e6e8c,#46526c 60%,#3a4560);border-radius:2px 2px 0 0"></div>
<svg style="position:absolute;left:341px;top:50px" width="7" height="5" viewBox="0 0 7 5"><path d="M0.5 4.5L3.5 0.5 6.5 4.5z" fill="#e8ecf2"/></svg>
<div class="t" style="left:343.5px;top:50.5px;width:258px;text-align:center;font-size:7.3px;color:#dfe4ec">Submesh...</div>
<div style="left:341.0px;top:58px;width:25px;height:26px;background:#30353e;border:1px solid #1d2025;border-radius:1px"></div>
<svg style="position:absolute;left:342.0px;top:59px" width="24" height="24" viewBox="0 0 24 24"><path d="M3 8l10-5 8 4v9l-10 5-8-4z" fill="#4a98e8"/><path d="M3 8l10-5 8 4-10 5z" fill="#b8dcff"/><path d="M3 8q0 8 8 12" fill="#80c0f8"/></svg>
<div style="left:368.5px;top:58px;width:25px;height:26px;background:#30353e;border:1px solid #1d2025;border-radius:1px"></div>
<svg style="position:absolute;left:369.5px;top:59px" width="24" height="24" viewBox="0 0 24 24"><path d="M4 6l8-3 9 5-2 11-12 1z" fill="#3a90e8"/><path d="M2 20l8-10 3 3-8 8z" fill="#e8c080"/><path d="M10 10l9-7" stroke="#c08040" stroke-width="2"/></svg>
<div style="left:396.0px;top:58px;width:25px;height:26px;background:#30353e;border:1px solid #1d2025;border-radius:1px"></div>
<svg style="position:absolute;left:397.0px;top:59px" width="24" height="24" viewBox="0 0 24 24"><rect x="8" y="4" width="13" height="15" fill="#5aa8f0"/><path d="M12 4l5 5" stroke="#fff"/><path d="M2 12h6v-4l6 7-6 7v-4H2z" fill="#e02020" transform="translate(0,-3)"/></svg>
<svg style="position:absolute;left:412.5px;top:59px" width="7" height="7" viewBox="0 0 7 7"><rect x=".5" y=".5" width="6" height="6" fill="#5e687a" stroke="#a8b2c2" stroke-width=".7"/><path d="M1.8 5.5V1.8H5.5" stroke="#f0f2f6" fill="none" stroke-width=".8"/><path d="M3 6l3-3v3z" fill="#f0f2f6"/></svg>
<div style="left:423.5px;top:58px;width:25px;height:26px;background:#30353e;border:1px solid #1d2025;border-radius:1px"></div>
<svg style="position:absolute;left:424.5px;top:59px" width="24" height="24" viewBox="0 0 24 24"><rect x="3" y="3" width="8" height="8" fill="#80c0f8"/><rect x="3" y="12" width="8" height="8" fill="#5aa8f0"/><rect x="12" y="3" width="6" height="8" fill="#5aa8f0"/><path d="M10 10h9v9h-9z" fill="#e02020"/><path d="M15 15l6 5" stroke="#1a40e0" stroke-width="2"/></svg>
<svg style="position:absolute;left:440.0px;top:59px" width="7" height="7" viewBox="0 0 7 7"><rect x=".5" y=".5" width="6" height="6" fill="#5e687a" stroke="#a8b2c2" stroke-width=".7"/><path d="M1.8 5.5V1.8H5.5" stroke="#f0f2f6" fill="none" stroke-width=".8"/><path d="M3 6l3-3v3z" fill="#f0f2f6"/></svg>
<div style="left:451.0px;top:58px;width:25px;height:26px;background:#30353e;border:1px solid #1d2025;border-radius:1px"></div>
<svg style="position:absolute;left:452.0px;top:59px" width="24" height="24" viewBox="0 0 24 24"><path d="M6 12l8-4 8 4-8 4z" fill="#80c0f8"/><path d="M6 12v5l8 4v-5z" fill="#3a8ae0"/><path d="M14 16v5l8-4v-5z" fill="#2a6ac0"/><rect x="4" y="10" width="7" height="5" fill="#e02020"/><path d="M7 10V2l-4 5h8z" fill="#1a40e0"/></svg>
<svg style="position:absolute;left:467.5px;top:59px" width="7" height="7" viewBox="0 0 7 7"><rect x=".5" y=".5" width="6" height="6" fill="#5e687a" stroke="#a8b2c2" stroke-width=".7"/><path d="M1.8 5.5V1.8H5.5" stroke="#f0f2f6" fill="none" stroke-width=".8"/><path d="M3 6l3-3v3z" fill="#f0f2f6"/></svg>
<div style="left:478.5px;top:58px;width:25px;height:26px;background:#30353e;border:1px solid #1d2025;border-radius:1px"></div>
<svg style="position:absolute;left:479.5px;top:59px" width="24" height="24" viewBox="0 0 24 24"><path d="M3 6l10-2 8 3v10l-10 3-8-3z" fill="#4aa0f0"/><path d="M3 8h18M12 4v16" stroke="#a8d8ff" stroke-width=".8"/><path d="M5 18L20 4" stroke="#e02020" stroke-width="2.5"/><path d="M5 18L20 4" stroke="#fff" stroke-width=".7"/></svg>
<svg style="position:absolute;left:495.0px;top:59px" width="7" height="7" viewBox="0 0 7 7"><rect x=".5" y=".5" width="6" height="6" fill="#5e687a" stroke="#a8b2c2" stroke-width=".7"/><path d="M1.8 5.5V1.8H5.5" stroke="#f0f2f6" fill="none" stroke-width=".8"/><path d="M3 6l3-3v3z" fill="#f0f2f6"/></svg>
<div style="left:506.0px;top:58px;width:25px;height:26px;background:#30353e;border:1px solid #1d2025;border-radius:1px"></div>
<svg style="position:absolute;left:507.0px;top:59px" width="24" height="24" viewBox="0 0 24 24"><rect x="2" y="2" width="20" height="20" fill="#2a70d0"/><path d="M2 2l10 4 10-4-4 10 4 10-10-4-10 4 4-10z" fill="#5aa8f0"/><path d="M6 6h12v12H6z" fill="#e83030"/><path d="M6 18L18 6" stroke="#a01010"/></svg>
<div style="left:533.5px;top:58px;width:25px;height:26px;background:#30353e;border:1px solid #1d2025;border-radius:1px"></div>
<svg style="position:absolute;left:534.5px;top:59px" width="24" height="24" viewBox="0 0 24 24"><path d="M2 16l10 5 10-5-3-4H5z" fill="#b89a40"/><path d="M5 7l8-4 7 4v8l-8 4-7-4z" fill="#5aa8f0"/><path d="M5 7l8-4 7 4-8 4z" fill="#b8dcff"/><path d="M3 15l9-4 10 5" stroke="#e02020" fill="none"/></svg>
<svg style="position:absolute;left:550.0px;top:59px" width="7" height="7" viewBox="0 0 7 7"><rect x=".5" y=".5" width="6" height="6" fill="#5e687a" stroke="#a8b2c2" stroke-width=".7"/><path d="M1.8 5.5V1.8H5.5" stroke="#f0f2f6" fill="none" stroke-width=".8"/><path d="M3 6l3-3v3z" fill="#f0f2f6"/></svg>
<div style="left:561.0px;top:58px;width:25px;height:26px;background:#30353e;border:1px solid #1d2025;border-radius:1px"></div>
<svg style="position:absolute;left:562.0px;top:59px" width="24" height="24" viewBox="0 0 24 24"><rect x="3" y="3" width="18" height="18" fill="#4aa0f0"/><path d="M3 12h18M12 3v18" stroke="#a8d8ff" stroke-width=".8"/><path d="M6 5l5 3-2 8" stroke="#a01080" stroke-width="1.5" fill="none"/></svg>
<svg style="position:absolute;left:577.5px;top:59px" width="7" height="7" viewBox="0 0 7 7"><rect x=".5" y=".5" width="6" height="6" fill="#5e687a" stroke="#a8b2c2" stroke-width=".7"/><path d="M1.8 5.5V1.8H5.5" stroke="#f0f2f6" fill="none" stroke-width=".8"/><path d="M3 6l3-3v3z" fill="#f0f2f6"/></svg>
<div style="left:46px;top:121px;width:886px;height:6px;background:#1b1b1b"></div>
<div style="left:46px;top:121px;width:46px;height:6px;background:linear-gradient(90deg,#353c4a,#323946 70%,#2a2e36)"></div>
<div style="left:46px;top:121px;width:886px;height:1px;background:#2e3440"></div>
<div style="left:882.5px;top:32.5px;width:48.5px;height:10.4px;background:linear-gradient(#4e5a72,#3a4458 50%,#2e3648);border:1px solid #1a1d22;border-radius:2px;box-shadow:inset 0 1px 0 #64708a"></div>
<div class="t" style="left:884.5px;top:33.8px;font-size:7.1px;color:#dce0e8;">:Right button</div>
<div style="left:932px;top:30px;width:268px;height:596px;background:#1f1f1f"></div>
<div style="left:933.5px;top:31.8px;width:266.5px;height:8.5px;background:linear-gradient(#465470,#364058 60%,#2c3344)"></div>
<div class="t" style="left:936.5px;top:35.6px;font-size:7.15px;color:#e2e6ee;">Scene nodes browser</div>
<div style="left:1177px;top:33px;width:11px;height:10px;background:linear-gradient(#4a6aa0,#2a3a5a);border:1px solid #111;border-radius:1px"></div>
<div style="left:1189px;top:33px;width:11px;height:10px;background:linear-gradient(#4a6aa0,#2a3a5a);border:1px solid #111;border-radius:1px"></div>
<svg style="position:absolute;left:1179px;top:34px" width="8" height="8" viewBox="0 0 8 8"><path d="M2.5 1h3v4h-3zM1 5h6M4 5v3" stroke="#fff" fill="none" stroke-width=".9"/></svg>
<svg style="position:absolute;left:1191px;top:34px" width="8" height="8" viewBox="0 0 8 8"><path d="M1.5 1.5l5 5M6.5 1.5l-5 5" stroke="#fff" stroke-width="1.2"/></svg>
<div style="left:933.5px;top:43px;width:266.5px;height:14px;background:linear-gradient(#4c5c80,#3c4864 55%,#2e3648)"></div>
<div style="left:937px;top:45.8px;width:38px;height:11.200000000000003px;background:linear-gradient(#3a4254,#2a2f3a);border:1px solid #1d2028;border-bottom:none;border-radius:2px 2px 0 0"></div>
<div class="t" style="left:941.5px;top:49.2px;font-size:7.15px;color:#e6eaf0;">Hierarchy</div>
<div style="left:975px;top:44.3px;width:37.5px;height:12.700000000000003px;background:linear-gradient(#5c6a88,#46526c);border:1px solid #1d2028;border-bottom:none;border-radius:2px 2px 0 0"></div>
<div class="t" style="left:978.5px;top:49.2px;font-size:7.15px;color:#e6eaf0;">Structure</div>
<div style="left:1012.5px;top:45.8px;width:39.5px;height:11.200000000000003px;background:linear-gradient(#3a4254,#2a2f3a);border:1px solid #1d2028;border-bottom:none;border-radius:2px 2px 0 0"></div>
<div class="t" style="left:1016.0px;top:49.2px;font-size:7.15px;color:#e6eaf0;">Properties</div>
<div style="left:936px;top:57px;width:256px;height:569px;background:#222;border:1px solid #2c3038"></div>
<div style="left:937px;top:58px;width:51px;height:134px;background:linear-gradient(90deg,#3a4456 0%,#364052 70%,#323a4a 100%)"></div>
<div class="sb" style="left:939px;top:62px;width:14.299999999999955px;height:11.5px;"></div>
<div class="t" style="left:939px;top:64.5px;width:14.299999999999955px;text-align:center;font-size:7.15px;color:#e2e6ec">L0</div>
<div class="sb" style="left:955px;top:62px;width:15.700000000000045px;height:11.5px;"></div>
<div class="t" style="left:955px;top:64.5px;width:15.700000000000045px;text-align:center;font-size:7.15px;color:#e2e6ec">L1</div>
<div class="sb" style="left:972.5px;top:62px;width:15.5px;height:11.5px;"></div>
<div class="t" style="left:972.5px;top:64.5px;width:15.5px;text-align:center;font-size:7.15px;color:#e2e6ec">L2</div>
<div class="sb" style="left:990px;top:62px;width:14.5px;height:11.5px;"></div>
<div class="t" style="left:990px;top:64.5px;width:14.5px;text-align:center;font-size:7.15px;color:#e2e6ec">L3</div>
<div class="sb" style="left:1006.7px;top:62px;width:14.299999999999955px;height:11.5px;"></div>
<div class="t" style="left:1006.7px;top:64.5px;width:14.299999999999955px;text-align:center;font-size:7.15px;color:#e2e6ec">L4</div>
<div class="sb" style="left:1023.5px;top:62px;width:19.5px;height:11.5px;"></div>
<div class="t" style="left:1023.5px;top:64.5px;width:19.5px;text-align:center;font-size:7.15px;color:#e2e6ec">COL</div>
<div class="sb" style="left:1046px;top:62px;width:25.5px;height:11.5px;"></div>
<div class="t" style="left:1046px;top:64.5px;width:25.5px;text-align:center;font-size:7.15px;color:#e2e6ec">Dust</div>
<div class="sb" style="left:1073.3px;top:62px;width:21.40000000000009px;height:11.5px;"></div>
<div class="t" style="left:1073.3px;top:64.5px;width:21.40000000000009px;text-align:center;font-size:7.15px;color:#e2e6ec">Dirt</div>
<div class="sb" style="left:1096.5px;top:62px;width:32.0px;height:11.5px;"></div>
<div class="t" style="left:1096.5px;top:64.5px;width:32.0px;text-align:center;font-size:7.15px;color:#e2e6ec">Scratch</div>
<div class="sb" style="left:1130.7px;top:62px;width:25.299999999999955px;height:11.5px;"></div>
<div class="t" style="left:1130.7px;top:64.5px;width:25.299999999999955px;text-align:center;font-size:7.15px;color:#e2e6ec">Burn</div>
<div class="sb" style="left:939px;top:75px;width:42.299999999999955px;height:11.3px;"></div>
<div class="t" style="left:943px;top:77.5px;font-size:7.15px;color:#e2e6ec;">Damage</div>
<div style="left:974.3px;top:77px;width:1px;height:7.5px;background:#1a1c22"></div>
<svg style="position:absolute;left:975.3px;top:79px" width="5" height="4" viewBox="0 0 5 4"><path d="M0.5 1h4L2.5 3z" fill="#e8e8e8"/></svg>
<div class="sb" style="left:983.5px;top:75px;width:43.200000000000045px;height:11.3px;"></div>
<div class="t" style="left:987.5px;top:77.5px;font-size:7.15px;color:#e2e6ec;">Motion</div>
<div style="left:1019.7px;top:77px;width:1px;height:7.5px;background:#1a1c22"></div>
<svg style="position:absolute;left:1020.7px;top:79px" width="5" height="4" viewBox="0 0 5 4"><path d="M0.5 1h4L2.5 3z" fill="#e8e8e8"/></svg>
<div style="left:939px;top:94.5px;width:251px;height:1px;background:linear-gradient(90deg,#3a4a6a,#4a5a7a,#3a4a6a)"></div>
<div style="left:1031.4149921875px;top:90.5px;width:67.170015625px;height:9px;background:#222"></div>
<div class="t" style="left:1005px;top:91.2px;width:120px;text-align:center;font-size:7.15px;color:#cfd4dc">Custom scene state:</div>
<div style="left:939px;top:107px;width:251px;height:1px;background:linear-gradient(90deg,#3a4a6a,#4a5a7a,#3a4a6a)"></div>
<div style="left:1027.6274921875px;top:103px;width:70.74501562500001px;height:9px;background:#222"></div>
<div class="t" style="left:1003px;top:103.7px;width:120px;text-align:center;font-size:7.15px;color:#cfd4dc">Custom state actions:</div>
<div class="sb" style="left:939px;top:114px;width:43px;height:12px;"></div>
<div class="t" style="left:939px;top:116.5px;width:43px;text-align:center;font-size:7.15px;color:#e2e6ec;">New State</div>
<div class="db" style="left:984px;top:114px;width:48px;height:12px;"></div>
<div class="t" style="left:984px;top:116.5px;width:48px;text-align:center;font-size:7.15px;color:#1c1e22;text-shadow:0 0 1px #6a7282,0 0 1px #6a7282">Delete State</div>
<div class="db" style="left:1034.7px;top:114px;width:36.799999999999955px;height:12px;"></div>
<div class="t" style="left:1034.7px;top:116.5px;width:36.799999999999955px;text-align:center;font-size:7.15px;color:#1c1e22;text-shadow:0 0 1px #6a7282,0 0 1px #6a7282">Edit State</div>
<div style="left:939px;top:133.5px;width:251px;height:1px;background:linear-gradient(90deg,#3a4a6a,#4a5a7a,#3a4a6a)"></div>
<div style="left:1022.8707421875px;top:129.5px;width:84.258515625px;height:9px;background:#222"></div>
<div class="t" style="left:1005px;top:130.2px;width:120px;text-align:center;font-size:7.15px;color:#cfd4dc">Selection structure states:</div>
<div style="left:939px;top:141px;width:250px;height:11px;background:linear-gradient(#3c465a,#2c3342);border:1px solid #1e222a"></div>
<svg style="position:absolute;left:940px;top:141.5px" width="10" height="10" viewBox="0 0 10 10"><path d="M3 4V2.5a2 2 0 0 1 4 0" stroke="#c8a050" fill="none" stroke-width="1"/><rect x="2" y="4.5" width="6" height="5" fill="#c8a050"/></svg>
<div class="sb" style="left:939px;top:154px;width:99px;height:23.3px;"></div>
<svg style="position:absolute;left:941px;top:156px" width="22" height="21" viewBox="0 0 22 21"><path d="M2 9l9-3 9 3-9 3z" fill="#e0b070"/><path d="M2 9v7l9 4v-8z" fill="#c89040"/><path d="M11 12v8l9-4V9z" fill="#a87030"/><path d="M6 8q2-6 9-6" stroke="#20a020" stroke-width="3" fill="none"/><path d="M13 0l4 2-3 3z" fill="#20a020"/></svg>
<div class="t" style="left:963.5px;top:163px;font-size:7.15px;color:#1c1e22;text-shadow:0 0 1px #6a7282,0 0 1px #6a7282">Convert to Compound</div>
<div class="sb" style="left:1040px;top:154px;width:48px;height:23.3px;"></div>
<svg style="position:absolute;left:1042px;top:156px" width="22" height="21" viewBox="0 0 22 21"><path d="M2 9l9-3 9 3-9 3z" fill="#e0b070"/><path d="M2 9v7l9 4v-8z" fill="#c89040"/><path d="M11 12v8l9-4V9z" fill="#a87030"/><path d="M11 0l6 5h-3v6H8V5H5z" fill="#20a030"/></svg>
<div class="t" style="left:1063.5px;top:163px;font-size:7.15px;color:#1c1e22;text-shadow:0 0 1px #6a7282,0 0 1px #6a7282">Dismiss</div>
<div class="sb" style="left:1091px;top:154px;width:20.299999999999955px;height:11px;"></div>
<div class="t" style="left:1091px;top:156.8px;width:20.299999999999955px;text-align:center;font-size:7.15px;color:#1c1e22;text-shadow:0 0 1px #6a7282,0 0 1px #6a7282">Del</div>
<div class="sb" style="left:1113.6px;top:154px;width:19.800000000000182px;height:11px;"></div>
<div class="t" style="left:1113.6px;top:156.8px;width:19.800000000000182px;text-align:center;font-size:7.15px;color:#1c1e22;text-shadow:0 0 1px #6a7282,0 0 1px #6a7282">Lock</div>
<div class="sb" style="left:1135.6px;top:154px;width:31.40000000000009px;height:11px;"></div>
<div class="t" style="left:1135.6px;top:156.8px;width:31.40000000000009px;text-align:center;font-size:7.15px;color:#1c1e22;text-shadow:0 0 1px #6a7282,0 0 1px #6a7282">Group</div>
<div class="sb" style="left:1091px;top:167px;width:36.700000000000045px;height:11px;"></div>
<div class="t" style="left:1091px;top:169.8px;width:36.700000000000045px;text-align:center;font-size:7.15px;color:#1c1e22;text-shadow:0 0 1px #6a7282,0 0 1px #6a7282">Ungroup</div>
<div class="sb" style="left:1130.5px;top:167px;width:47.90000000000009px;height:11px;"></div>
<div class="t" style="left:1130.5px;top:169.8px;width:47.90000000000009px;text-align:center;font-size:7.15px;color:#1c1e22;text-shadow:0 0 1px #6a7282,0 0 1px #6a7282">Open group</div>
<div class="sb" style="left:975px;top:180px;width:11px;height:10px;"></div>
<div style="left:937px;top:194px;width:257px;height:123px;background:linear-gradient(#b8b8b8,#c8c8c8 10%,#c0c0c0 50%,#a6a6a6);border:1px solid #5a6070"></div>
<div style="left:938px;top:195px;width:255px;height:12px;background:linear-gradient(#e8e6e0,#deddd6)"></div>
<div style="left:933px;top:318px;width:267px;height:12px;background:#1e1e1e"></div>
<div style="left:933px;top:325.5px;width:267px;height:2px;background:#3a4a66"></div>
<div style="left:937px;top:330px;width:263px;height:278px;background:linear-gradient(#cacaca,#bdbdbd 40%,#a2a2a2)"></div>
<div style="left:937px;top:330px;width:263px;height:12px;background:linear-gradient(#e8e6df,#e0dfd8)"></div>
<div style="left:933px;top:608px;width:267px;height:16px;background:linear-gradient(#3c3f45,#34373d 50%,#2a2c31)"></div>
<div style="left:986px;top:610px;width:9px;height:11px;background:linear-gradient(#e8eef8,#9ab0d0);border:1px solid #345"></div>
<div class="t" style="left:999.5px;top:613px;font-size:7.15px;color:#d4d8e0;">Show All</div>
<div style="left:1033px;top:610px;width:9px;height:11px;background:linear-gradient(#e8eef8,#9ab0d0);border:1px solid #345"></div>
<div class="t" style="left:1046.5px;top:613px;font-size:7.15px;color:#d4d8e0;">Hide All</div>
<div style="left:1076px;top:610px;width:9px;height:11px;background:linear-gradient(#e8eef8,#9ab0d0);border:1px solid #345"></div>
<div class="t" style="left:1089.5px;top:613px;font-size:7.15px;color:#d4d8e0;">Move Up</div>
<div style="left:1123px;top:610px;width:9px;height:11px;background:linear-gradient(#e8eef8,#9ab0d0);border:1px solid #345"></div>
<div style="left:1137px;top:610px;width:9px;height:11px;background:linear-gradient(#e8eef8,#9ab0d0);border:1px solid #345"></div>
<div style="left:1151px;top:610px;width:9px;height:11px;background:linear-gradient(#e8eef8,#9ab0d0);border:1px solid #345"></div>
<div style="left:1165px;top:610px;width:9px;height:11px;background:linear-gradient(#e8eef8,#9ab0d0);border:1px solid #345"></div>
<div style="left:1077px;top:612px;width:7px;height:5px;background:#e02020"></div>
<div style="left:1124px;top:615px;width:7px;height:4px;background:#e02020"></div>
<div style="left:1138px;top:611px;width:6px;height:6px;background:#e02020;opacity:.8"></div>
<div style="left:46px;top:127px;width:886px;height:500px;background:#1c1c1c"></div>
<div style="left:46px;top:127px;width:454px;height:13px;background:linear-gradient(#52628a 0%,#44527a 30%,#343e58 60%,#1e2430 100%);border-bottom:1px solid #111"></div>
<div style="left:47px;top:128px;width:21px;height:11.5px;background:linear-gradient(#5a6888,#3a4660);border:1px solid #202634;border-radius:1px;box-shadow:inset 0 0 0 1px #6a7898"></div>
<div class="t" style="left:49px;top:130.2px;font-size:7.6px;color:#eef2f8;">Back</div>
<svg style="position:absolute;left:72.5px;top:131px" width="4" height="6" viewBox="0 0 4 6"><path d="M3.5 0.5L0.5 3 3.5 5.5z" fill="#e0e4ea"/></svg>
<div class="t" style="left:85px;top:130.5px;font-size:7.15px;color:#d6dbe4;">Tripod</div>
<div class="t" style="left:111px;top:130.5px;font-size:7.15px;color:#d6dbe4;">Image</div>
<div class="t" style="left:138px;top:130.5px;font-size:7.15px;color:#d6dbe4;">Color</div>
<div class="t" style="left:163px;top:130.5px;font-size:7.15px;color:#d6dbe4;">Grid</div>
<div class="t" style="left:183px;top:130.5px;font-size:7.15px;color:#d6dbe4;">Pivot</div>
<div style="left:46px;top:140px;width:454px;height:186px;background-color:#cbcbcb;background-image:linear-gradient(90deg,#939393 1px,transparent 1px),linear-gradient(#939393 1px,transparent 1px),linear-gradient(90deg,#bdbdbd 1px,transparent 1px),linear-gradient(#bdbdbd 1px,transparent 1px),linear-gradient(90deg,#c3c3c3 1px,transparent 1px),linear-gradient(#c3c3c3 1px,transparent 1px);background-size:125px 100%,100% 125px,25px 100%,100% 25px,6.25px 100%,100% 6.25px;background-position:101.9px 0,0 29.900000000000006px,1.9000000000000057px 0,0 4.900000000000006px,1.9000000000000057px 0,0 4.900000000000006px"></div>
<div style="left:273px;top:140px;width:1px;height:186px;background:#6a8ab4"></div>
<div style="left:46px;top:232.5px;width:454px;height:1px;background:#a8b4c4"></div>
<svg style="position:absolute;left:266px;top:226px" width="15" height="15" viewBox="0 0 15 15"><path d="M1 1l13 13M14 1L1 14" stroke="#d890c0" stroke-width=".8"/><rect x="4" y="4" width="7" height="7" fill="#8a3070"/></svg>
<svg style="position:absolute;left:48px;top:296px" width="24" height="26" viewBox="0 0 24 26"><text x="16" y="8" font-size="9" font-weight="bold" fill="#20a020" font-family="Liberation Sans">y</text><text x="0" y="25" font-size="8" font-weight="bold" fill="#e02020" font-family="Liberation Sans">x</text><path d="M8 24h14M22 11v13" stroke="#e08080" stroke-width=".9"/><path d="M22 11v13" stroke="#60b060" stroke-width=".9"/><path d="M8 21V12l-3 0 5-5 5 5h-3v5h4v-3l5 5-5 5v-3H8z" fill="#ece4d0" stroke="#d4b060" stroke-width=".8" stroke-dasharray="1 .6"/><text x="19" y="25" font-size="7" font-weight="bold" fill="#2050e0" font-family="Liberation Sans">z</text></svg>
<div style="left:343.5px;top:128.3px;width:52.0px;height:11px;background:linear-gradient(#5a6a92,#3e4c6c 50%,#202634);border:1px solid #1a2030;border-radius:1px;box-shadow:inset 0 1px 0 #6a7aa0"></div>
<svg style="position:absolute;left:344.5px;top:129px" width="10" height="10" viewBox="0 0 10 10"><path d="M1 9L8 1" stroke="#e8e8e8" stroke-width=".9"/><rect x="1.5" y="2" width="6.5" height="6.5" fill="none" stroke="#c8c8c8" stroke-width=".7"/></svg>
<svg style="position:absolute;left:354px;top:129px" width="10" height="10" viewBox="0 0 10 10"><path d="M1.5 2h6v6h-6z" fill="none" stroke="#b070e0" stroke-width="1"/><path d="M2 8l5-5" stroke="#d0a0ff" stroke-width="1.2"/></svg>
<svg style="position:absolute;left:363px;top:129px" width="10" height="10" viewBox="0 0 10 10"><path d="M1 9l6-7" stroke="#e040e0" stroke-width="1.6"/><circle cx="7" cy="2" r="1.3" fill="#f0a0f0"/></svg>
<svg style="position:absolute;left:371.5px;top:129px" width="10" height="10" viewBox="0 0 10 10"><path d="M1 9l7-6" stroke="#40c040" stroke-width="1.6"/><path d="M1 6l7-4" stroke="#e0a020" stroke-width="1.6"/><path d="M1 3l6-2" stroke="#e03030" stroke-width="1.4"/><rect x="1" y="5" width="5" height="4" fill="#3080e0"/></svg>
<svg style="position:absolute;left:383.5px;top:129px" width="10" height="10" viewBox="0 0 10 10"><path d="M2 4h4L4 6z" fill="#ddd"/></svg>
<div style="left:399px;top:128.3px;width:33px;height:11px;background:linear-gradient(#5a6a92,#3e4c6c 50%,#202634);border:1px solid #1a2030;border-radius:1px;box-shadow:inset 0 1px 0 #6a7aa0"></div>
<svg style="position:absolute;left:401px;top:129.5px" width="10" height="10" viewBox="0 0 10 10"><circle cx="4" cy="4" r="3" fill="#e8f0ff" stroke="#99a" stroke-width=".8"/><path d="M6 6l3 3" stroke="#c03030" stroke-width="1.5"/></svg>
<div class="t" style="left:412.5px;top:131px;font-size:7.15px;color:#d6dbe4;">Zoom</div>
<div style="left:433.5px;top:128.3px;width:26.5px;height:11px;background:linear-gradient(#5a6a92,#3e4c6c 50%,#202634);border:1px solid #1a2030;border-radius:1px;box-shadow:inset 0 1px 0 #6a7aa0"></div>
<svg style="position:absolute;left:435.5px;top:129.5px" width="10" height="10" viewBox="0 0 10 10"><path d="M1.5 8.5V4.5l1.5-3 1.5 1 1.5-1 1.5 1.5 1 2v4z" fill="#e8ecf4" stroke="#889" stroke-width=".4"/></svg>
<div class="t" style="left:446.5px;top:131px;font-size:7.15px;color:#d6dbe4;">Pan</div>
<div style="left:462px;top:128.3px;width:22.5px;height:11px;background:linear-gradient(#5a6a92,#3e4c6c 50%,#202634);border:1px solid #1a2030;border-radius:1px;box-shadow:inset 0 1px 0 #6a7aa0"></div>
<svg style="position:absolute;left:463.5px;top:129.5px" width="10" height="10" viewBox="0 0 10 10"><rect x="2.5" y="4.5" width="5" height="3.5" fill="#a8e090"/><circle cx="2.5" cy="3.5" r="1.5" fill="#d04060"/><path d="M3 1.5h4l1.5 1.5" stroke="#888" stroke-width=".7" fill="none"/></svg>
<div class="t" style="left:474.5px;top:131px;font-size:7.15px;color:#d6dbe4;">Fit</div>
<div style="left:487px;top:128.3px;width:11.5px;height:11px;background:linear-gradient(#5a6a92,#3e4c6c 50%,#202634);border:1px solid #1a2030;border-radius:1px;box-shadow:inset 0 1px 0 #6a7aa0"></div>
<div style="left:489.5px;top:131px;width:6.5px;height:6px;border:1px solid #e8ecf4;border-top-width:2px"></div>
<div style="left:504px;top:127px;width:426px;height:13px;background:linear-gradient(#52628a 0%,#44527a 30%,#343e58 60%,#1e2430 100%);border-bottom:1px solid #111"></div>
<div style="left:505px;top:128px;width:19px;height:11.5px;background:linear-gradient(#5a6888,#3a4660);border:1px solid #202634;border-radius:1px;box-shadow:inset 0 0 0 1px #6a7898"></div>
<div class="t" style="left:507px;top:130.2px;font-size:7.6px;color:#eef2f8;">Left</div>
<svg style="position:absolute;left:530.5px;top:131px" width="4" height="6" viewBox="0 0 4 6"><path d="M3.5 0.5L0.5 3 3.5 5.5z" fill="#e0e4ea"/></svg>
<div class="t" style="left:541.5px;top:130.5px;font-size:7.15px;color:#d6dbe4;">Tripod</div>
<div class="t" style="left:567px;top:130.5px;font-size:7.15px;color:#d6dbe4;">Image</div>
<div class="t" style="left:594.5px;top:130.5px;font-size:7.15px;color:#d6dbe4;">Color</div>
<div class="t" style="left:618.5px;top:130.5px;font-size:7.15px;color:#d6dbe4;">Grid</div>
<div class="t" style="left:638.5px;top:130.5px;font-size:7.15px;color:#d6dbe4;">Pivot</div>
<div style="left:504px;top:140px;width:426px;height:48px;background-color:#cbcbcb;background-image:linear-gradient(90deg,#999999 1px,transparent 1px),linear-gradient(#999999 1px,transparent 1px),linear-gradient(90deg,#c0c0c0 1px,transparent 1px),linear-gradient(#c0c0c0 1px,transparent 1px);background-size:62.1px 100%,100% 62.1px,6.21px 100%,100% 6.21px;background-position:25.9px 0,0 30.099999999999994px,1.0600000000000005px 0,0 5.2599999999999945px"></div>
<div style="left:717px;top:140px;width:1px;height:48px;background:#6a8ab4"></div>
<div style="left:733px;top:128.3px;width:92.5px;height:11px;background:linear-gradient(#5a6a92,#3e4c6c 50%,#202634);border:1px solid #1a2030;border-radius:1px;box-shadow:inset 0 1px 0 #6a7aa0"></div>
<svg style="position:absolute;left:736px;top:129px" width="10" height="10" viewBox="0 0 10 10"><path d="M1 9L8 1" stroke="#e8e8e8" stroke-width=".9"/><rect x="1.5" y="2" width="6.5" height="6.5" fill="none" stroke="#c8c8c8" stroke-width=".7"/></svg>
<svg style="position:absolute;left:747px;top:129px" width="10" height="10" viewBox="0 0 10 10"><path d="M1.5 2h6v6h-6z" fill="none" stroke="#b070e0" stroke-width="1"/><path d="M2 8l5-5" stroke="#d0a0ff" stroke-width="1.2"/></svg>
<svg style="position:absolute;left:757px;top:129px" width="10" height="10" viewBox="0 0 10 10"><path d="M1 9l6-7" stroke="#e040e0" stroke-width="1.6"/><circle cx="7" cy="2" r="1.3" fill="#f0a0f0"/></svg>
<svg style="position:absolute;left:768px;top:129px" width="10" height="10" viewBox="0 0 10 10"><path d="M1 9l7-6" stroke="#40c040" stroke-width="1.6"/><path d="M1 6l7-4" stroke="#e0a020" stroke-width="1.6"/><path d="M1 3l6-2" stroke="#e03030" stroke-width="1.4"/><rect x="1" y="5" width="5" height="4" fill="#3080e0"/></svg>
<svg style="position:absolute;left:779px;top:129px" width="10" height="10" viewBox="0 0 10 10"><path d="M1 8l3-6 4 3v3z" fill="#4a90e8"/><path d="M4 2l4 3" stroke="#e03030"/></svg>
<svg style="position:absolute;left:788px;top:129px" width="10" height="10" viewBox="0 0 10 10"><rect x="1" y="1" width="8" height="8" fill="#f0f0f0"/><path d="M1 1h2v2H1zM5 1h2v2H5zM3 3h2v2H3zM7 3h2v2H7zM1 5h2v2H1zM5 5h2v2H5zM3 7h2v2H3zM7 7h2v2H7z" fill="#5040c0"/></svg>
<svg style="position:absolute;left:797px;top:129px" width="10" height="10" viewBox="0 0 10 10"><rect x="1" y="3" width="7" height="6" fill="#2a2a2a" stroke="#555" stroke-width=".6"/><path d="M2 3l2-2h3l1 2" fill="#444"/></svg>
<svg style="position:absolute;left:807px;top:129px" width="10" height="10" viewBox="0 0 10 10"><circle cx="4.5" cy="4" r="3" fill="#f0e070"/><rect x="3.5" y="7" width="2" height="2" fill="#ccc"/></svg>
<svg style="position:absolute;left:816px;top:129px" width="10" height="10" viewBox="0 0 10 10"><path d="M2 4h4L4 6z" fill="#ddd"/></svg>
<div style="left:829px;top:128.3px;width:33px;height:11px;background:linear-gradient(#5a6a92,#3e4c6c 50%,#202634);border:1px solid #1a2030;border-radius:1px;box-shadow:inset 0 1px 0 #6a7aa0"></div>
<svg style="position:absolute;left:831px;top:129.5px" width="10" height="10" viewBox="0 0 10 10"><circle cx="4" cy="4" r="3" fill="#e8f0ff" stroke="#99a" stroke-width=".8"/><path d="M6 6l3 3" stroke="#c03030" stroke-width="1.5"/></svg>
<div class="t" style="left:842.5px;top:131px;font-size:7.15px;color:#d6dbe4;">Zoom</div>
<div style="left:863px;top:128.3px;width:26.5px;height:11px;background:linear-gradient(#5a6a92,#3e4c6c 50%,#202634);border:1px solid #1a2030;border-radius:1px;box-shadow:inset 0 1px 0 #6a7aa0"></div>
<svg style="position:absolute;left:865px;top:129.5px" width="10" height="10" viewBox="0 0 10 10"><path d="M1.5 8.5V4.5l1.5-3 1.5 1 1.5-1 1.5 1.5 1 2v4z" fill="#e8ecf4" stroke="#889" stroke-width=".4"/></svg>
<div class="t" style="left:876px;top:131px;font-size:7.15px;color:#d6dbe4;">Pan</div>
<div style="left:890.6px;top:128.3px;width:22.5px;height:11px;background:linear-gradient(#5a6a92,#3e4c6c 50%,#202634);border:1px solid #1a2030;border-radius:1px;box-shadow:inset 0 1px 0 #6a7aa0"></div>
<svg style="position:absolute;left:892.1px;top:129.5px" width="10" height="10" viewBox="0 0 10 10"><rect x="2.5" y="4.5" width="5" height="3.5" fill="#a8e090"/><circle cx="2.5" cy="3.5" r="1.5" fill="#d04060"/><path d="M3 1.5h4l1.5 1.5" stroke="#888" stroke-width=".7" fill="none"/></svg>
<div class="t" style="left:903.1px;top:131px;font-size:7.15px;color:#d6dbe4;">Fit</div>
<div style="left:916px;top:128.3px;width:11.5px;height:11px;background:linear-gradient(#5a6a92,#3e4c6c 50%,#202634);border:1px solid #1a2030;border-radius:1px;box-shadow:inset 0 1px 0 #6a7aa0"></div>
<div style="left:918.5px;top:131px;width:6.5px;height:6px;border:1px solid #e8ecf4;border-top-width:2px"></div>
<div style="left:504px;top:330px;width:426px;height:13px;background:linear-gradient(#4c5a78,#272d3a)"></div>
<div style="left:504px;top:343px;width:426px;height:281px;background:#c8c8c8"></div>
<div style="left:46px;top:330.5px;width:454px;height:13px;background:linear-gradient(#52628a 0%,#44527a 30%,#343e58 60%,#1e2430 100%);border-bottom:1px solid #111"></div>
<div style="left:47px;top:331.5px;width:44px;height:11.5px;background:linear-gradient(#5a6888,#3a4660);border:1px solid #202634;border-radius:1px;box-shadow:inset 0 0 0 1px #6a7898"></div>
<div class="t" style="left:49px;top:333.7px;font-size:7.6px;color:#eef2f8;">UV Mapper</div>
<svg style="position:absolute;left:96.5px;top:334.5px" width="4" height="6" viewBox="0 0 4 6"><path d="M3.5 0.5L0.5 3 3.5 5.5z" fill="#e0e4ea"/></svg>
<div class="t" style="left:108px;top:334.0px;font-size:7.15px;color:#d6dbe4;">Tripod</div>
<div class="t" style="left:134.7px;top:334.0px;font-size:7.15px;color:#d6dbe4;">Grid</div>
<div class="t" style="left:154.8px;top:334.0px;font-size:7.15px;color:#d6dbe4;">Pivot</div>
<div style="left:46px;top:343px;width:20px;height:269px;background:linear-gradient(90deg,#2e3a50,#4a6896 15%,#4a6490 45%,#34425c 60%,#2a3346)"></div>
<div style="left:48px;top:345px;width:15px;height:14px;background:linear-gradient(#3a4660,#1e2638);border:1px solid #111;border-radius:1px"></div>
<svg style="position:absolute;left:48.5px;top:345px" width="14" height="14" viewBox="0 0 14 14"><path d="M2 7l3-4 4 2-1 4z" fill="#30b030"/><path d="M5 9l5-4 3 3-4 4z" fill="#40c040"/><circle cx="10" cy="9" r="2.5" fill="#f0d020"/></svg>
<div style="left:48px;top:360px;width:15px;height:14px;background:linear-gradient(#3a4660,#1e2638);border:1px solid #111;border-radius:1px"></div>
<svg style="position:absolute;left:48.5px;top:360px" width="14" height="14" viewBox="0 0 14 14"><path d="M2 7l3-4 4 2-1 4z" fill="#30b030"/><path d="M5 9l5-4 3 3-4 4z" fill="#40c040"/><path d="M8 7l4 4M12 7l-4 4" stroke="#e02020" stroke-width="1.6"/></svg>
<div style="left:48px;top:375px;width:15px;height:14px;background:linear-gradient(#3a4660,#1e2638);border:1px solid #111;border-radius:1px"></div>
<svg style="position:absolute;left:48.5px;top:375px" width="14" height="14" viewBox="0 0 14 14"><path d="M2 7l3-4 4 2-1 4z" fill="#e02020"/><path d="M5 9l5-4 3 3-4 4z" fill="#c02020"/><path d="M6 8l2 3 4-5" stroke="#30c030" stroke-width="1.6" fill="none"/></svg>
<div style="left:48px;top:390px;width:15px;height:14px;background:linear-gradient(#3a4660,#1e2638);border:1px solid #111;border-radius:1px"></div>
<svg style="position:absolute;left:48.5px;top:390px" width="14" height="14" viewBox="0 0 14 14"><rect x="2" y="2" width="6" height="9" fill="#3a90e8"/><rect x="8" y="6" width="3" height="6" fill="#e03030"/></svg>
<div style="left:48px;top:405px;width:15px;height:14px;background:linear-gradient(#3a4660,#1e2638);border:1px solid #111;border-radius:1px"></div>
<svg style="position:absolute;left:48.5px;top:405px" width="14" height="14" viewBox="0 0 14 14"><rect x="2" y="2" width="9" height="2" fill="#3a90e8"/><rect x="2" y="6" width="4" height="6" fill="#3a90e8"/><rect x="8" y="6" width="4" height="6" fill="#3a90e8"/></svg>
<div style="left:48px;top:420px;width:15px;height:14px;background:linear-gradient(#3a4660,#1e2638);border:1px solid #111;border-radius:1px"></div>
<svg style="position:absolute;left:48.5px;top:420px" width="14" height="14" viewBox="0 0 14 14"><path d="M2 9h5M5 7l2 2-2 2" stroke="#5ab0ff" stroke-width="1.5" fill="none"/><path d="M12 5H7M9 3L7 5l2 2" stroke="#5ab0ff" stroke-width="1.5" fill="none"/></svg>
<div style="left:48px;top:435px;width:15px;height:14px;background:linear-gradient(#3a4660,#1e2638);border:1px solid #111;border-radius:1px"></div>
<svg style="position:absolute;left:48.5px;top:435px" width="14" height="14" viewBox="0 0 14 14"><path d="M5 2v5M3 5l2 2 2-2" stroke="#5ab0ff" stroke-width="1.5" fill="none"/><path d="M9 12V7M7 9l2-2 2 2" stroke="#5ab0ff" stroke-width="1.5" fill="none"/></svg>
<div style="left:48px;top:450px;width:15px;height:14px;background:linear-gradient(#3a4660,#1e2638);border:1px solid #111;border-radius:1px"></div>
<svg style="position:absolute;left:48.5px;top:450px" width="14" height="14" viewBox="0 0 14 14"><rect x="2" y="1" width="10" height="12" fill="#3a90e8"/><path d="M4 3l6 2-6 2 6 2-6 2" stroke="#e8f0ff" fill="none"/></svg>
<div style="left:48px;top:465px;width:15px;height:14px;background:linear-gradient(#3a4660,#1e2638);border:1px solid #111;border-radius:1px"></div>
<svg style="position:absolute;left:48.5px;top:465px" width="14" height="14" viewBox="0 0 14 14"><circle cx="7" cy="7" r="5.5" fill="#1a3a80" stroke="#5ab0ff"/><text x="7" y="10" font-size="8" text-anchor="middle" fill="#8ac8ff" font-family="Liberation Sans">R</text></svg>
<div style="left:66px;top:343px;width:358px;height:269px;background:#dcdde0"></div>
<div style="left:283px;top:343px;width:1px;height:269px;background:#6a8ab4"></div>
<div style="left:66px;top:476.5px;width:358px;height:1px;background:#6a8ab4"></div>
<div style="left:283px;top:477px;width:65px;height:65px;background:#b0b0b3;filter:blur(1px)"></div>
<svg style="position:absolute;left:276px;top:470px" width="15" height="15" viewBox="0 0 15 15"><path d="M1 1l13 13M14 1L1 14" stroke="#d890c0" stroke-width=".8"/><rect x="4" y="4" width="7" height="7" fill="#8a3070"/></svg>
<div style="left:70px;top:568px;width:37px;height:39px;background:#d6d7da"></div>
<svg style="position:absolute;left:68px;top:566px" width="42" height="44" viewBox="0 0 42 44"><path d="M6 7.5h24" stroke="#e04040" stroke-width="1"/><path d="M6 7.5v22" stroke="#20a020" stroke-width="1"/><text x="33" y="9.5" font-size="8.5" font-weight="bold" fill="#e01818" font-family="Liberation Sans">u</text><text x="1" y="40" font-size="8.5" font-weight="bold" fill="#18a018" font-family="Liberation Sans">v</text><path d="M15 11L22 20H18.5V25H24V21.5L33 28.5 24 35.5V32H11.5V20H8Z" fill="#ece6d6" stroke="#d8bc78" stroke-width=".8"/></svg>
<div style="left:382px;top:331.8px;width:13px;height:11px;background:linear-gradient(#5a6a92,#3e4c6c 50%,#202634);border:1px solid #1a2030;border-radius:1px"></div>
<svg style="position:absolute;left:386px;top:335px" width="5" height="4" viewBox="0 0 5 4"><path d="M0 .5h5L2.5 3z" fill="#ddd"/></svg>
<div style="left:398px;top:331.8px;width:30px;height:11px;background:linear-gradient(#5a6a92,#3e4c6c 50%,#202634);border:1px solid #1a2030;border-radius:1px"></div>
<svg style="position:absolute;left:400px;top:332px" width="9" height="9" viewBox="0 0 9 9"><circle cx="4" cy="4" r="3" fill="#e8f0ff" stroke="#aac"/><path d="M6 6l3 3" stroke="#c03030" stroke-width="1.5"/></svg>
<div class="t" style="left:410px;top:334px;font-size:7.15px;color:#d6dbe4;">Zoom</div>
<div style="left:46px;top:612px;width:454px;height:11.5px;background:linear-gradient(#4e5e80,#3a4866 50%,#262e3e)"></div>
<div style="left:47px;top:612.8px;width:48.3px;height:10.3px;background:linear-gradient(#4a5670,#2e3648);border:1px solid #1a1e26;border-radius:1px;box-shadow:inset 0 1px 0 #62708c"></div>
<svg style="position:absolute;left:51px;top:615.5px" width="7" height="5" viewBox="0 0 7 5"><path d="M0.5 4.5L3.5 .5 6.5 4.5z" fill="#e8ecf2"/></svg>
<div class="t" style="left:61.5px;top:614.7px;font-size:7.15px;color:#dfe3ea;">Material...</div>
<div style="left:98px;top:612.8px;width:45px;height:10.3px;background:linear-gradient(#4a5670,#2e3648);border:1px solid #1a1e26;border-radius:1px;box-shadow:inset 0 1px 0 #62708c"></div>
<svg style="position:absolute;left:102px;top:615.5px" width="7" height="5" viewBox="0 0 7 5"><path d="M0.5 4.5L3.5 .5 6.5 4.5z" fill="#e8ecf2"/></svg>
<div class="t" style="left:112.5px;top:614.7px;font-size:7.15px;color:#dfe3ea;">Objects...</div>
<div style="left:145.6px;top:612.8px;width:53.70000000000002px;height:10.3px;background:linear-gradient(#4a5670,#2e3648);border:1px solid #1a1e26;border-radius:1px;box-shadow:inset 0 1px 0 #62708c"></div>
<svg style="position:absolute;left:149.6px;top:615.5px" width="7" height="5" viewBox="0 0 7 5"><path d="M0.5 4.5L3.5 .5 6.5 4.5z" fill="#e8ecf2"/></svg>
<div class="t" style="left:160.1px;top:614.7px;font-size:7.15px;color:#dfe3ea;">Background</div>
<div style="left:201.5px;top:612.8px;width:33.5px;height:10.3px;background:linear-gradient(#4a5670,#2e3648);border:1px solid #1a1e26;border-radius:1px;box-shadow:inset 0 1px 0 #62708c"></div>
<div style="left:203.5px;top:614px;width:9px;height:8px;background:#000"></div>
<div class="t" style="left:216.0px;top:614.7px;font-size:7.15px;color:#dfe3ea;">Mesh</div>
<div style="left:424px;top:175px;width:558px;height:442px;background:#212121;box-shadow:0 0 6px rgba(0,0,0,.5)"></div>
<div style="left:424px;top:194px;width:120px;height:423px;background:linear-gradient(180deg,#4c5e84 0%,#3e4c68 4%,#37435c 40%,#2f394d 100%);clip-path:polygon(0 0,110px 0,110px 15px,98px 15px,95px 34px,70px 286px,61px 423px,0 423px)"></div>
<div style="left:424px;top:605px;width:558px;height:12px;background:rgba(0,0,0,.38)"></div>
<div style="left:424px;top:175px;width:558px;height:19px;background:#fff;border:1px solid #c8c8c8;border-bottom:none"></div>
<svg style="position:absolute;left:430px;top:179px" width="8" height="10" viewBox="0 0 8 10"><path d="M0.5 1.5Q0.5 0.5 1.5 0.5H7.5L0.5 9.5z" fill="#e02828"/><path d="M7.5 0.5V8.5Q7.5 9.5 6.5 9.5H0.5z" fill="#1a48d0"/><path d="M2.2 2.6H5.8L2.4 7.4H6" stroke="#fff" stroke-width="1.2" fill="none"/></svg>
<div class="t" style="left:441px;top:180.5px;font-size:7.6px;color:#9a9a9a;">Export</div>
<svg style="position:absolute;left:968.5px;top:180.5px" width="9" height="8" viewBox="0 0 9 8"><path d="M1 .5l7 7M8 .5l-7 7" stroke="#999" stroke-width=".8"/></svg>
<div style="left:424px;top:194px;width:558px;height:6px;background:linear-gradient(#4a5e8a,#3a4a6c 40%,rgba(40,48,64,0))"></div>
<div class="t" style="left:432px;top:199.8px;font-size:7.15px;color:#c4c8d0;">Recent Folders:</div>
<div style="left:483px;top:196px;width:492px;height:12.5px;background:linear-gradient(#3a4a6a 0%,#5a6a90 30%,#34405c 60%,#1a1e2a 100%);border:1px solid #151820;border-bottom:1px solid #5a6272;border-radius:1px"></div>
<svg style="position:absolute;left:965px;top:199.5px" width="7" height="5" viewBox="0 0 7 5"><path d="M.5 1L3.5 4 6.5 1" stroke="#ccd4e0" fill="none" stroke-width=".9"/></svg>
<div class="t" style="left:431px;top:217.8px;font-size:7.15px;color:#c4c8d0;">Save in:</div>
<div style="left:458px;top:213.5px;width:138px;height:13.5px;background:#fff;border:1px solid #7a7a7a"></div>
<svg style="position:absolute;left:461px;top:215px" width="9" height="10" viewBox="0 0 9 10"><rect x="1" y="1" width="7" height="8" fill="#e8f0f8" stroke="#8aa0c0" stroke-width=".7"/><rect x="2" y="5" width="5" height="3" fill="#4a90d8"/></svg>
<div class="t" style="left:473.5px;top:218px;font-size:7.15px;color:#111;">Documents</div>
<div style="left:584.5px;top:214.5px;width:1px;height:11.5px;background:#d8d8d8"></div>
<svg style="position:absolute;left:587px;top:218px" width="7" height="5" viewBox="0 0 7 5"><path d="M.5 1L3.5 4 6.5 1" stroke="#555" fill="none" stroke-width=".8"/></svg>
<div style="left:597px;top:213px;width:289px;height:17px;background:linear-gradient(#4a5a7e,#3e4c6c 50%,#2c3548)"></div>
<svg style="position:absolute;left:599px;top:214px" width="62" height="13" viewBox="0 0 62 13"><circle cx="5.5" cy="6.5" r="4.5" fill="#9a9a9a" stroke="#555" stroke-width=".6"/><circle cx="5.5" cy="5.5" r="3" fill="#c8c8c8"/><path d="M8 6.5H3.5M5.5 4.5l-2 2 2 2" stroke="#fff" fill="none" stroke-width="1.1"/><path d="M15 5h4l1 1h3v6h-8z" fill="#e8c040"/><path d="M20 1v8M18 3l2-2 2 2" stroke="#20a020" stroke-width="1.8" fill="none"/><path d="M30 5h4l1 1h4v6h-9z" fill="#f0c850"/><circle cx="38" cy="4.5" r="1.6" fill="#e04020"/><rect x="45" y="2" width="9" height="8.5" fill="#f0f4ff" stroke="#2a60d0" stroke-width=".9"/><path d="M47 4.5h1.5M51 4.5h1.5M47 8h1.5M51 8h1.5" stroke="#d08020" stroke-width="1.3"/><path d="M56 6h3.5l-1.75 2z" fill="#333"/></svg>
<div style="left:427.5px;top:231px;width:460.5px;height:249.5px;background:#fff"></div>
<div style="left:597px;top:231px;width:1px;height:249.5px;background:#eef0f4"></div>
<div style="left:687px;top:231px;width:1px;height:249.5px;background:#eef0f4"></div>
<div style="left:762px;top:231px;width:1px;height:249.5px;background:#eef0f4"></div>
<div style="left:812px;top:231px;width:1px;height:249.5px;background:#eef0f4"></div>
<svg style="position:absolute;left:510px;top:230px" width="8" height="4" viewBox="0 0 8 4"><path d="M.5 3.5L4 .5 7.5 3.5" stroke="#888" fill="none" stroke-width=".7"/></svg>
<div class="t" style="left:431px;top:235px;font-size:7.3px;color:#1e1e1e;">Name</div>
<div class="t" style="left:601px;top:235px;font-size:7.3px;color:#1e1e1e;">Date modified</div>
<div class="t" style="left:691px;top:235px;font-size:7.3px;color:#1e1e1e;">Type</div>
<div class="t" style="left:766px;top:235px;font-size:7.3px;color:#1e1e1e;">Size</div>
<svg style="position:absolute;left:434px;top:247.1px" width="8" height="11" viewBox="0 0 8 11"><rect x="0" y="0" width="7.5" height="10.5" fill="#f6d77c"/><rect x="0.8" y="0.5" width="5.5" height="9.5" fill="#fbe3a0"/><path d="M6 6.5L7.5 5v5.5H4.5z" fill="#e8bc50"/></svg>
<div class="t" style="left:444px;top:249.2px;font-size:7.1px;color:#0a0a0a;">3DReaperDX</div>
<div class="t" style="left:601px;top:249.2px;font-size:7.1px;color:#0a0a0a;">02-Oct-24 2:23 AM</div>
<div class="t" style="left:691px;top:249.2px;font-size:7.1px;color:#0a0a0a;">File folder</div>
<svg style="position:absolute;left:434px;top:258.95px" width="8" height="11" viewBox="0 0 8 11"><rect x="0" y="0" width="7.5" height="10.5" fill="#f6d77c"/><rect x="0.8" y="0.5" width="5.5" height="9.5" fill="#fbe3a0"/><path d="M6 6.5L7.5 5v5.5H4.5z" fill="#e8bc50"/></svg>
<div class="t" style="left:444px;top:261.05px;font-size:7.1px;color:#0a0a0a;">3ds Max 2024</div>
<div class="t" style="left:601px;top:261.05px;font-size:7.1px;color:#0a0a0a;">30-Sep-25 12:33 AM</div>
<div class="t" style="left:691px;top:261.05px;font-size:7.1px;color:#0a0a0a;">File folder</div>
<svg style="position:absolute;left:434px;top:270.8px" width="8" height="11" viewBox="0 0 8 11"><rect x="0" y="0" width="7.5" height="10.5" fill="#f6d77c"/><rect x="0.8" y="0.5" width="5.5" height="9.5" fill="#fbe3a0"/><path d="M6 6.5L7.5 5v5.5H4.5z" fill="#e8bc50"/></svg>
<div class="t" style="left:444px;top:272.90000000000003px;font-size:7.1px;color:#0a0a0a;">3ds Max 2025</div>
<div class="t" style="left:601px;top:272.90000000000003px;font-size:7.1px;color:#0a0a0a;">11-Oct-25 12:23 AM</div>
<div class="t" style="left:691px;top:272.90000000000003px;font-size:7.1px;color:#0a0a0a;">File folder</div>
<svg style="position:absolute;left:434px;top:282.65px" width="8" height="11" viewBox="0 0 8 11"><rect x="0" y="0" width="7.5" height="10.5" fill="#f6d77c"/><rect x="0.8" y="0.5" width="5.5" height="9.5" fill="#fbe3a0"/><path d="M6 6.5L7.5 5v5.5H4.5z" fill="#e8bc50"/></svg>
<div class="t" style="left:444px;top:284.75px;font-size:7.1px;color:#0a0a0a;">3dsmax</div>
<div class="t" style="left:601px;top:284.75px;font-size:7.1px;color:#0a0a0a;">27-Jan-25 6:23 PM</div>
<div class="t" style="left:691px;top:284.75px;font-size:7.1px;color:#0a0a0a;">File folder</div>
<svg style="position:absolute;left:434px;top:294.5px" width="8" height="11" viewBox="0 0 8 11"><rect x="0" y="0" width="7.5" height="10.5" fill="#f6d77c"/><rect x="0.8" y="0.5" width="5.5" height="9.5" fill="#fbe3a0"/><path d="M6 6.5L7.5 5v5.5H4.5z" fill="#e8bc50"/></svg>
<div class="t" style="left:444px;top:296.6px;font-size:7.1px;color:#0a0a0a;">Adobe</div>
<div class="t" style="left:601px;top:296.6px;font-size:7.1px;color:#0a0a0a;">23-Apr-25 7:12 PM</div>
<div class="t" style="left:691px;top:296.6px;font-size:7.1px;color:#0a0a0a;">File folder</div>
<svg style="position:absolute;left:434px;top:306.35px" width="8" height="11" viewBox="0 0 8 11"><rect x="0" y="0" width="7.5" height="10.5" fill="#f6d77c"/><rect x="0.8" y="0.5" width="5.5" height="9.5" fill="#fbe3a0"/><path d="M6 6.5L7.5 5v5.5H4.5z" fill="#e8bc50"/></svg>
<div class="t" style="left:444px;top:308.45000000000005px;font-size:7.1px;color:#0a0a0a;">Assassin's Creed Mirage</div>
<div class="t" style="left:601px;top:308.45000000000005px;font-size:7.1px;color:#0a0a0a;">17-Feb-25 1:19 PM</div>
<div class="t" style="left:691px;top:308.45000000000005px;font-size:7.1px;color:#0a0a0a;">File folder</div>
<svg style="position:absolute;left:434px;top:318.2px" width="8" height="11" viewBox="0 0 8 11"><rect x="0" y="0" width="7.5" height="10.5" fill="#f6d77c"/><rect x="0.8" y="0.5" width="5.5" height="9.5" fill="#fbe3a0"/><path d="M6 6.5L7.5 5v5.5H4.5z" fill="#e8bc50"/></svg>
<div class="t" style="left:444px;top:320.3px;font-size:7.1px;color:#0a0a0a;">Chaos Cosmos</div>
<div class="t" style="left:601px;top:320.3px;font-size:7.1px;color:#0a0a0a;">11-Oct-25 5:17 PM</div>
<div class="t" style="left:691px;top:320.3px;font-size:7.1px;color:#0a0a0a;">File folder</div>
<svg style="position:absolute;left:434px;top:330.05px" width="8" height="11" viewBox="0 0 8 11"><rect x="0" y="0" width="7.5" height="10.5" fill="#f6d77c"/><rect x="0.8" y="0.5" width="5.5" height="9.5" fill="#fbe3a0"/><path d="M6 6.5L7.5 5v5.5H4.5z" fill="#e8bc50"/></svg>
<div class="t" style="left:444px;top:332.15000000000003px;font-size:7.1px;color:#0a0a0a;">Criterion Games</div>
<div class="t" style="left:601px;top:332.15000000000003px;font-size:7.1px;color:#0a0a0a;">29-Jun-25 12:29 PM</div>
<div class="t" style="left:691px;top:332.15000000000003px;font-size:7.1px;color:#0a0a0a;">File folder</div>
<svg style="position:absolute;left:434px;top:341.9px" width="8" height="11" viewBox="0 0 8 11"><rect x="0" y="0" width="7.5" height="10.5" fill="#f6d77c"/><rect x="0.8" y="0.5" width="5.5" height="9.5" fill="#fbe3a0"/><path d="M6 6.5L7.5 5v5.5H4.5z" fill="#e8bc50"/></svg>
<div class="t" style="left:444px;top:344.0px;font-size:7.1px;color:#0a0a0a;">Custom Office Templates</div>
<div class="t" style="left:601px;top:344.0px;font-size:7.1px;color:#0a0a0a;">22-Sep-24 11:58 AM</div>
<div class="t" style="left:691px;top:344.0px;font-size:7.1px;color:#0a0a0a;">File folder</div>
<svg style="position:absolute;left:434px;top:353.75px" width="8" height="11" viewBox="0 0 8 11"><rect x="0" y="0" width="7.5" height="10.5" fill="#f6d77c"/><rect x="0.8" y="0.5" width="5.5" height="9.5" fill="#fbe3a0"/><path d="M6 6.5L7.5 5v5.5H4.5z" fill="#e8bc50"/></svg>
<div class="t" style="left:444px;top:355.85px;font-size:7.1px;color:#0a0a0a;">EA Games</div>
<div class="t" style="left:601px;top:355.85px;font-size:7.1px;color:#0a0a0a;">01-Oct-24 9:22 PM</div>
<div class="t" style="left:691px;top:355.85px;font-size:7.1px;color:#0a0a0a;">File folder</div>
<svg style="position:absolute;left:434px;top:365.6px" width="8" height="11" viewBox="0 0 8 11"><rect x="0" y="0" width="7.5" height="10.5" fill="#f6d77c"/><rect x="0.8" y="0.5" width="5.5" height="9.5" fill="#fbe3a0"/><path d="M6 6.5L7.5 5v5.5H4.5z" fill="#e8bc50"/></svg>
<div class="t" style="left:444px;top:367.70000000000005px;font-size:7.1px;color:#0a0a0a;">iDealshare VideoGo</div>
<div class="t" style="left:601px;top:367.70000000000005px;font-size:7.1px;color:#0a0a0a;">26-Jun-25 10:34 PM</div>
<div class="t" style="left:691px;top:367.70000000000005px;font-size:7.1px;color:#0a0a0a;">File folder</div>
<svg style="position:absolute;left:434px;top:377.45px" width="8" height="11" viewBox="0 0 8 11"><rect x="0" y="0" width="7.5" height="10.5" fill="#f6d77c"/><rect x="0.8" y="0.5" width="5.5" height="9.5" fill="#fbe3a0"/><path d="M6 6.5L7.5 5v5.5H4.5z" fill="#e8bc50"/></svg>
<div class="t" style="left:444px;top:379.55px;font-size:7.1px;color:#0a0a0a;">maya</div>
<div class="t" style="left:601px;top:379.55px;font-size:7.1px;color:#0a0a0a;">29-Sep-25 1:07 AM</div>
<div class="t" style="left:691px;top:379.55px;font-size:7.1px;color:#0a0a0a;">File folder</div>
<svg style="position:absolute;left:434px;top:389.29999999999995px" width="8" height="11" viewBox="0 0 8 11"><rect x="0" y="0" width="7.5" height="10.5" fill="#f6d77c"/><rect x="0.8" y="0.5" width="5.5" height="9.5" fill="#fbe3a0"/><path d="M6 6.5L7.5 5v5.5H4.5z" fill="#e8bc50"/></svg>
<div class="t" style="left:444px;top:391.4px;font-size:7.1px;color:#0a0a0a;">My Games</div>
<div class="t" style="left:601px;top:391.4px;font-size:7.1px;color:#0a0a0a;">17-May-25 5:35 PM</div>
<div class="t" style="left:691px;top:391.4px;font-size:7.1px;color:#0a0a0a;">File folder</div>
<svg style="position:absolute;left:434px;top:401.15px" width="8" height="11" viewBox="0 0 8 11"><rect x="0" y="0" width="7.5" height="10.5" fill="#f6d77c"/><rect x="0.8" y="0.5" width="5.5" height="9.5" fill="#fbe3a0"/><path d="M6 6.5L7.5 5v5.5H4.5z" fill="#e8bc50"/></svg>
<div class="t" style="left:444px;top:403.25px;font-size:7.1px;color:#0a0a0a;">NFSTR</div>
<div class="t" style="left:601px;top:403.25px;font-size:7.1px;color:#0a0a0a;">04-Mar-25 5:36 PM</div>
<div class="t" style="left:691px;top:403.25px;font-size:7.1px;color:#0a0a0a;">File folder</div>
<svg style="position:absolute;left:434px;top:413.0px" width="8" height="11" viewBox="0 0 8 11"><rect x="0" y="0" width="7.5" height="10.5" fill="#f6d77c"/><rect x="0.8" y="0.5" width="5.5" height="9.5" fill="#fbe3a0"/><path d="M6 6.5L7.5 5v5.5H4.5z" fill="#e8bc50"/></svg>
<div class="t" style="left:444px;top:415.1px;font-size:7.1px;color:#0a0a0a;">PCSX2</div>
<div class="t" style="left:601px;top:415.1px;font-size:7.1px;color:#0a0a0a;">28-Sep-25 7:36 PM</div>
<div class="t" style="left:691px;top:415.1px;font-size:7.1px;color:#0a0a0a;">File folder</div>
<svg style="position:absolute;left:434px;top:424.85px" width="8" height="11" viewBox="0 0 8 11"><rect x="0" y="0" width="7.5" height="10.5" fill="#f6d77c"/><rect x="0.8" y="0.5" width="5.5" height="9.5" fill="#fbe3a0"/><path d="M6 6.5L7.5 5v5.5H4.5z" fill="#e8bc50"/></svg>
<div class="t" style="left:444px;top:426.95000000000005px;font-size:7.1px;color:#0a0a0a;">xgen</div>
<div class="t" style="left:601px;top:426.95000000000005px;font-size:7.1px;color:#0a0a0a;">29-Sep-25 1:07 AM</div>
<div class="t" style="left:691px;top:426.95000000000005px;font-size:7.1px;color:#0a0a0a;">File folder</div>
<div style="left:894px;top:219.5px;width:84px;height:85px;background:#282828;border-right:1px solid #56667e;border-bottom:1px solid #56667e;border-top:1px solid #303236;border-left:1px solid #2a2a2c"></div>
<div style="left:900.5px;top:306.3px;width:7.8px;height:7.8px;border:1px solid #7a8290;background:#1a1a1a"></div>
<div style="left:902.5px;top:308.3px;width:3.8px;height:3.8px;background:#f0a810"></div>
<div class="t" style="left:911px;top:308px;font-size:7.1px;color:#b8bcc4;letter-spacing:-.15px">Show Preview</div>
<div class="t" style="left:428px;top:488.5px;font-size:7.15px;color:#c0c4cc;">File name:</div>
<div style="left:474px;top:486px;width:352px;height:13.5px;background:#fff;border:1px solid #8a8a8a"></div>
<svg style="position:absolute;left:816px;top:490px" width="7" height="5" viewBox="0 0 7 5"><path d="M.5 1L3.5 4 6.5 1" stroke="#555" fill="none" stroke-width=".8"/></svg>
<div class="t" style="left:428px;top:507.5px;font-size:7.15px;color:#c0c4cc;">Save as type:</div>
<div style="left:474px;top:504.5px;width:352px;height:13.5px;background:#e2e2e2;border:1px solid #9a9a9a"></div>
<div class="t" style="left:477.5px;top:507.5px;font-size:7.15px;color:#111;">Wavefront .OBJ (*.obj)</div>
<svg style="position:absolute;left:816px;top:508.5px" width="7" height="5" viewBox="0 0 7 5"><path d="M.5 1L3.5 4 6.5 1" stroke="#555" fill="none" stroke-width=".8"/></svg>
<div style="left:838px;top:486px;width:46px;height:13.5px;background:linear-gradient(#5e74a2 0%,#46587e 40%,#262e40 60%,#1c202a 100%);border:1px solid #0e1016;border-radius:1px;box-shadow:0 1px 0 #5a5a5e"></div>
<div class="t" style="left:838px;top:490.2px;width:46px;text-align:center;font-size:7.15px;color:#e6eaf2">Export</div>
<div style="left:838px;top:504px;width:46px;height:13.5px;background:linear-gradient(#5e74a2 0%,#46587e 40%,#262e40 60%,#1c202a 100%);border:1px solid #0e1016;border-radius:1px;box-shadow:0 1px 0 #5a5a5e"></div>
<div class="t" style="left:838px;top:508.2px;width:46px;text-align:center;font-size:7.15px;color:#e6eaf2">Cancel</div>
<div style="left:427px;top:525px;width:227px;height:52px;border:1px solid #2a2e36;border-right-color:#505866;background:rgba(30,34,42,.25)"></div>
<div style="left:428px;top:565px;width:224px;height:10px;background:#e8e8e8;border-top:1px solid #bbb"></div>
<svg style="position:absolute;left:430px;top:567px" width="5" height="6" viewBox="0 0 5 6"><path d="M4 .5L1 3l3 2.5" stroke="#999" fill="none" stroke-width=".8"/></svg>
<svg style="position:absolute;left:645px;top:567px" width="5" height="6" viewBox="0 0 5 6"><path d="M1 .5L4 3 1 5.5" stroke="#999" fill="none" stroke-width=".8"/></svg>
<div style="left:656px;top:525.8px;width:117px;height:12.2px;background:linear-gradient(#5a70a0,#3e4c70 40%,#222a3c 75%,#1a1e2a);border:1px solid #0e1016;border-radius:1px;box-shadow:0 1px 0 #4a505a"></div>
<div class="t" style="left:659.5px;top:529px;font-size:7.1px;color:#e2e6ee;letter-spacing:-.15px">Split by groups</div>
<svg style="position:absolute;left:764px;top:529px" width="6" height="5" viewBox="0 0 6 5"><path d="M.5 1L3 3.5 5.5 1" stroke="#dde" fill="none" stroke-width=".9"/></svg>
<div style="left:655.3px;top:539.8px;width:7.5px;height:7.5px;border:1px solid #626a78;background:#1c1c1c"></div>
<div style="left:657.3px;top:541.8px;width:3.5px;height:3.5px;background:#f0a010"></div>
<div class="t" style="left:664.8px;top:540.8px;font-size:7.0px;color:#b8bcc4;letter-spacing:-.18px">Use Materials (*.MTL)</div>
<div style="left:661.8px;top:549.3px;width:7.5px;height:7.5px;border:1px solid #626a78;background:#1c1c1c"></div>
<div class="t" style="left:671.3px;top:550.3px;font-size:7.0px;color:#b8bcc4;letter-spacing:-.18px">No texture options (for 3ds Max)</div>
<div style="left:655.3px;top:559px;width:7.5px;height:7.5px;border:1px solid #626a78;background:#1c1c1c"></div>
<div class="t" style="left:664.8px;top:560px;font-size:7.0px;color:#b8bcc4;letter-spacing:-.18px">Flip YZ axes</div>
<div style="left:655.3px;top:568.6px;width:7.5px;height:7.5px;border:1px solid #626a78;background:#1c1c1c"></div>
<div class="t" style="left:664.8px;top:569.6px;font-size:7.0px;color:#b8bcc4;letter-spacing:-.18px">Optimize vertices</div>
<div style="left:971px;top:607px;width:11px;height:10px;background:#f0f0f0"></div>
<svg style="position:absolute;left:971px;top:607px" width="11" height="10" viewBox="0 0 11 10"><path d="M8.5 4h1M6.5 6h1M8.5 6h1M4.5 8h1M6.5 8h1M8.5 8h1" stroke="#888"/></svg>
<div style="left:46px;top:623px;width:1154px;height:3px;background:#23262c"></div>
<div style="left:46px;top:625px;width:1154px;height:1.5px;background:#3a4a66"></div>
<div style="left:46px;top:626.5px;width:1154px;height:12px;background:#232323"></div>
<div style="left:60px;top:638px;width:1140px;height:10px;background:#1b1b1b"></div>
<div style="left:46px;top:638px;width:14px;height:10px;background:#2a3446"></div>
<div style="left:47px;top:626.8px;width:60px;height:12px;background:linear-gradient(#4e5c7a,#36405a);border:1px solid #1a1e28;border-radius:0 0 2px 2px"></div>
<div class="t" style="left:50px;top:629.5px;font-size:7.15px;color:#dde2ea;">Messaging Bar</div>
<div style="left:954px;top:640.5px;width:40px;height:8px;background:linear-gradient(#4070d0,#2050b0);border:1px solid #0a1a40"></div>
<div class="t" style="left:954px;top:641.5px;width:40px;text-align:center;font-size:7.15px;color:#fff">Selected</div>
<div style="left:998px;top:640.5px;width:20px;height:8px;background:linear-gradient(#e8b040,#c08818);border:1px solid #503808"></div>
<div class="t" style="left:998px;top:641.5px;width:20px;text-align:center;font-size:7.15px;color:#3a2a08">Auto</div>
<div style="left:1022px;top:640.5px;width:33px;height:8px;background:linear-gradient(#4a6aa8,#30487a);border:1px solid #101830"></div>
<div style="left:1024px;top:642px;width:8px;height:6.5px;background:#e02020"></div>
<div class="t" style="left:1034px;top:641.5px;font-size:7.15px;color:#fff;">Pivot</div>
<div style="left:1059px;top:640.5px;width:11px;height:8px;background:linear-gradient(#8a7a40,#5a4a20)"></div>
<svg style="position:absolute;left:1061px;top:641px" width="7" height="7" viewBox="0 0 7 7"><path d="M3.5 0v4M1 3l2.5 3L6 3" stroke="#30c030" stroke-width="1.5" fill="none"/></svg>
<div class="t" style="left:1074px;top:641.3px;font-size:6.78px;color:#e0e4ea;">Cursor: 2.75000, 1.26000, 0.00000</div>
</body></html>
